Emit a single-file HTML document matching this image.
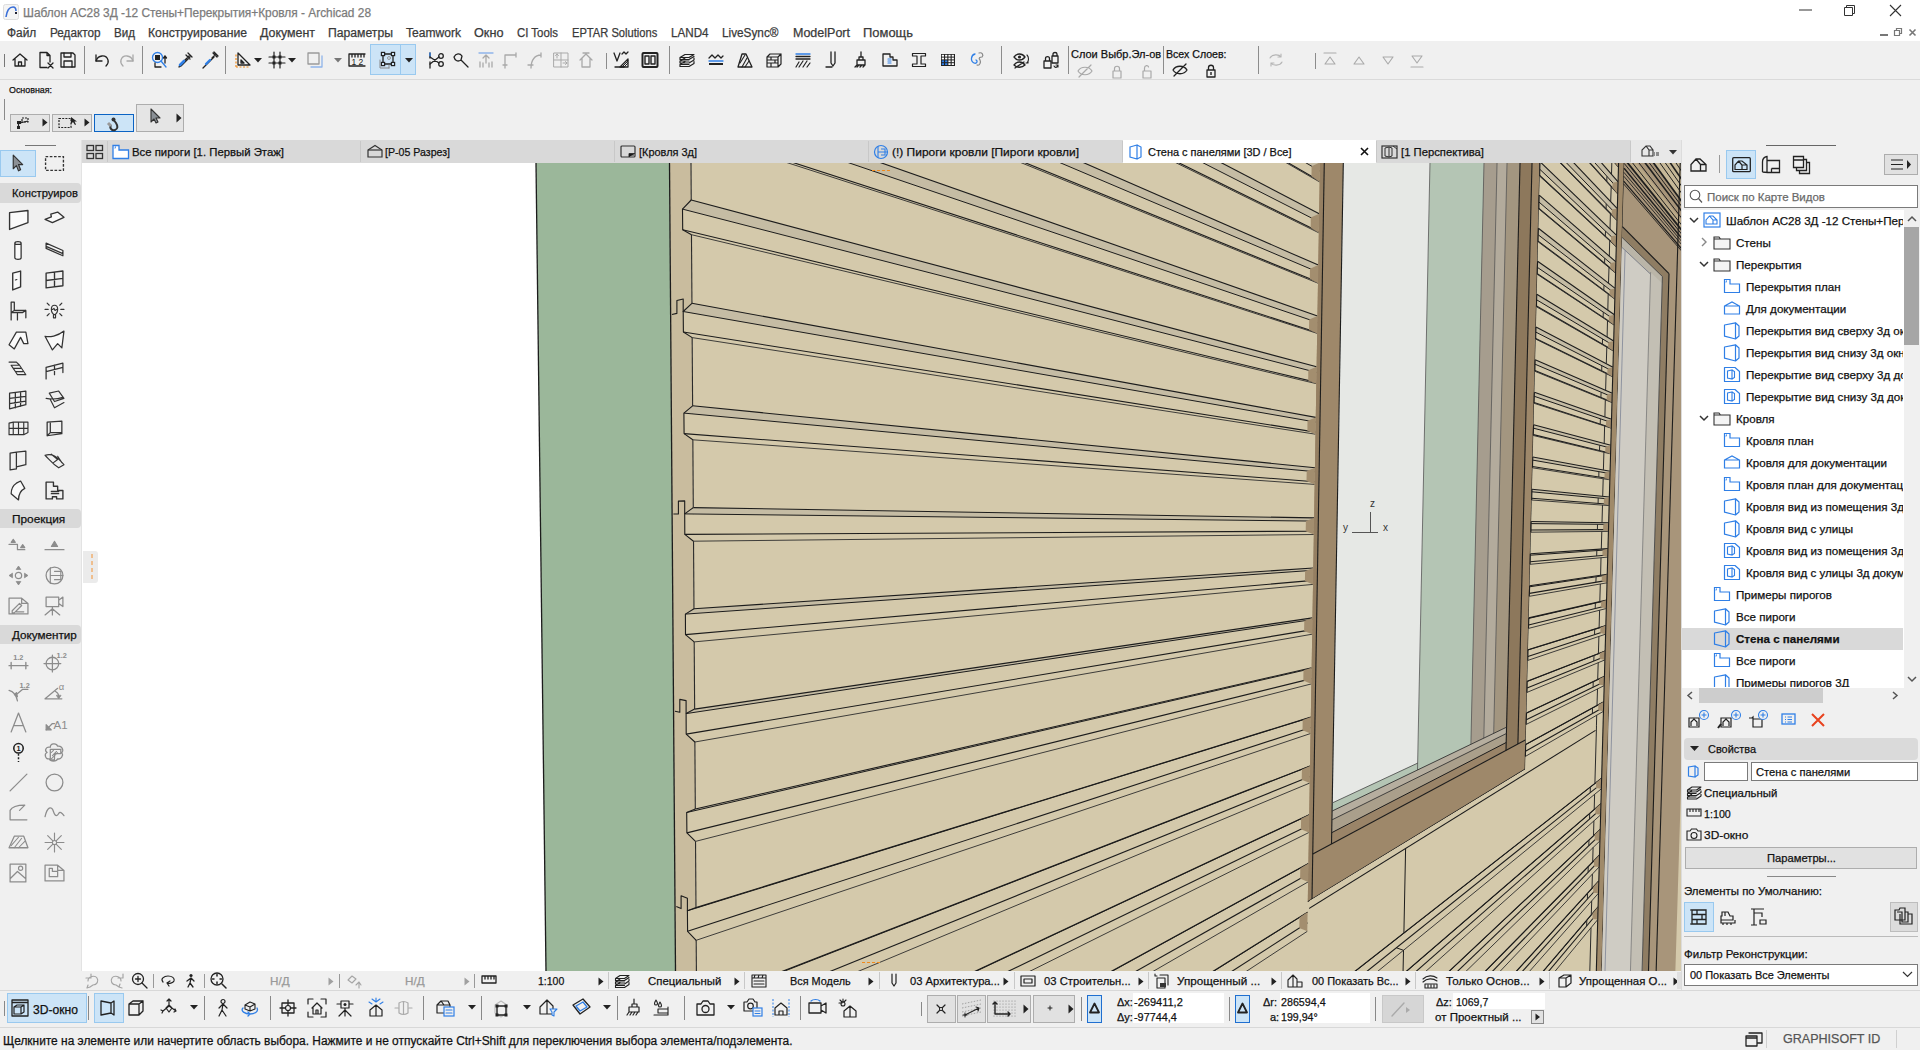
<!DOCTYPE html><html><head><meta charset='utf-8'><style>
*{box-sizing:border-box}
body{margin:0;width:1920px;height:1050px;overflow:hidden;position:relative;background:#f0f0f0;font-family:"Liberation Sans",sans-serif;color:#000}
.a{position:absolute}
.t{position:absolute;white-space:nowrap;line-height:1;-webkit-text-stroke:0.25px currentColor}
svg{position:absolute;overflow:visible}
</style></head><body><div class="a" style="left:0px;top:0px;width:1920px;height:41px;background:#fff;"></div><svg style="left:3px;top:4px" width="16" height="16" viewBox="0 0 16 16"><rect x="0.5" y="0.5" width="15" height="15" rx="2" fill="#f4f4f4" stroke="#ddd"/><path d="M3,13C4,6 7,3 10,3C12,3 13,5 13,7" fill="none" stroke="#3a6fd8" stroke-width="1.6"/><rect x="12" y="8" width="2" height="2" fill="#223"/></svg><div class="t" style="left:23px;top:7.00px;font-size:12px;color:#7b7b7b;transform:scaleX(0.9900);transform-origin:0 0;">Шаблон АС28 3Д -12 Стены+Перекрытия+Кровля - Archicad 28</div><svg style="left:1799px;top:9px" width="14" height="2" viewBox="0 0 14 2"><rect width="13" height="1" y="0.5" fill="#333"/></svg><svg style="left:1844px;top:5px" width="11" height="11" viewBox="0 0 11 11"><path d="M0.5,2.5H8.5V10.5H0.5Z M2.5,2.5V0.5H10.5V8.5H8.5" fill="none" stroke="#333" stroke-width="1"/></svg><svg style="left:1890px;top:5px" width="11" height="11" viewBox="0 0 11 11"><path d="M0,0L11,11M11,0L0,11" stroke="#333" stroke-width="1.1"/></svg><svg style="left:1880px;top:31px" width="9" height="5" viewBox="0 0 9 5"><rect y="3" width="8" height="2" fill="#777"/></svg><svg style="left:1894px;top:28px" width="8" height="8" viewBox="0 0 8 8"><path d="M0.5,2.5H5.5V7.5H0.5ZM2.5,2.5V0.5H7.5V5.5H5.5" fill="none" stroke="#777" stroke-width="1.2"/></svg><svg style="left:1909px;top:29px" width="7" height="7" viewBox="0 0 7 7"><path d="M0.5,0.5L6.5,6.5M6.5,0.5L0.5,6.5" stroke="#777" stroke-width="1.6"/></svg><div class="t" style="left:7.0px;top:27.00px;font-size:12px;color:#3a3a3a;transform:scaleX(0.9910);transform-origin:0 0;">Файл</div><div class="t" style="left:49.5px;top:27.00px;font-size:12px;color:#3a3a3a;transform:scaleX(0.9776);transform-origin:0 0;">Редактор</div><div class="t" style="left:113.5px;top:27.00px;font-size:12px;color:#3a3a3a;transform:scaleX(0.9669);transform-origin:0 0;">Вид</div><div class="t" style="left:147.5px;top:27.00px;font-size:12px;color:#3a3a3a;transform:scaleX(1.0175);transform-origin:0 0;">Конструирование</div><div class="t" style="left:259.5px;top:27.00px;font-size:12px;color:#3a3a3a;transform:scaleX(1.0332);transform-origin:0 0;">Документ</div><div class="t" style="left:327.5px;top:27.00px;font-size:12px;color:#3a3a3a;transform:scaleX(1.0161);transform-origin:0 0;">Параметры</div><div class="t" style="left:405.5px;top:27.00px;font-size:12px;color:#3a3a3a;transform:scaleX(1.0057);transform-origin:0 0;">Teamwork</div><div class="t" style="left:474.0px;top:27.00px;font-size:12px;color:#3a3a3a;transform:scaleX(1.0577);transform-origin:0 0;">Окно</div><div class="t" style="left:517.0px;top:27.00px;font-size:12px;color:#3a3a3a;transform:scaleX(0.9504);transform-origin:0 0;">CI Tools</div><div class="t" style="left:572.0px;top:27.00px;font-size:12px;color:#3a3a3a;transform:scaleX(0.9284);transform-origin:0 0;">EPTAR Solutions</div><div class="t" style="left:670.5px;top:27.00px;font-size:12px;color:#3a3a3a;transform:scaleX(0.9693);transform-origin:0 0;">LAND4</div><div class="t" style="left:721.5px;top:27.00px;font-size:12px;color:#3a3a3a;transform:scaleX(0.9818);transform-origin:0 0;">LiveSync®</div><div class="t" style="left:792.5px;top:27.00px;font-size:12px;color:#3a3a3a;transform:scaleX(1.0420);transform-origin:0 0;">ModelPort</div><div class="t" style="left:862.5px;top:27.00px;font-size:12px;color:#3a3a3a;transform:scaleX(1.0785);transform-origin:0 0;">Помощь</div><div class="a" style="left:0px;top:79px;width:1920px;height:1px;background:#dadada;"></div><div class="a" style="left:4px;top:54px;width:1px;height:13px;background:#777;"></div><div class="a" style="left:84px;top:46px;width:1px;height:28px;background:#8c8c8c;"></div><div class="a" style="left:142px;top:46px;width:1px;height:28px;background:#8c8c8c;"></div><div class="a" style="left:225px;top:46px;width:1px;height:28px;background:#8c8c8c;"></div><div class="a" style="left:669px;top:46px;width:1px;height:28px;background:#8c8c8c;"></div><div class="a" style="left:1001px;top:46px;width:1px;height:28px;background:#8c8c8c;"></div><div class="a" style="left:1068px;top:46px;width:1px;height:28px;background:#8c8c8c;"></div><div class="a" style="left:1163px;top:46px;width:1px;height:28px;background:#8c8c8c;"></div><div class="a" style="left:1258px;top:46px;width:1px;height:28px;background:#8c8c8c;"></div><div class="a" style="left:606px;top:53px;width:1px;height:16px;background:#8c8c8c;"></div><div class="a" style="left:1315px;top:53px;width:1px;height:16px;background:#8c8c8c;"></div><div class="a" style="left:370px;top:44px;width:46px;height:31px;background:#cce4f7;border:1px solid #99c9ef"></div><div class="a" style="left:400px;top:45px;width:1px;height:29px;background:#99c9ef;"></div><svg style="left:11px;top:51px" width="18" height="18" viewBox="0 0 18 18"><path d="M2,9L9,3L16,9M4,7.5V15H14V7.5M7.5,15V11H10.5V15" fill="none" stroke="#222" stroke-width="1.3" stroke-linejoin="round" stroke-linecap="round"/></svg><svg style="left:37px;top:51px" width="18" height="18" viewBox="0 0 18 18"><path d="M3,1.5H10L13,4.5V11M3,1.5V16.5H10M10,1.5V4.5H13" fill="none" stroke="#222" stroke-width="1.3" stroke-linejoin="round" stroke-linecap="round"/><path d="M11,12L16,17M16,12L11,17" fill="none" stroke="#222" stroke-width="1.3" stroke-linejoin="round" stroke-linecap="round"/></svg><svg style="left:59px;top:51px" width="18" height="18" viewBox="0 0 18 18"><path d="M2,2H14L16,4V16H2Z" fill="none" stroke="#222" stroke-width="1.3" stroke-linejoin="round" stroke-linecap="round"/><path d="M5,2V6H12V2M5,16V10H13V16" fill="none" stroke="#222" stroke-width="1.3" stroke-linejoin="round" stroke-linecap="round"/></svg><svg style="left:93px;top:51px" width="18" height="18" viewBox="0 0 18 18"><path d="M3,4V10H9" fill="none" stroke="#222" stroke-width="1.3" stroke-linejoin="round" stroke-linecap="round"/><path d="M3,10C5,4 13,3 15,9C16,12 14,14 13,15" fill="none" stroke="#222" stroke-width="1.3" stroke-linejoin="round" stroke-linecap="round"/></svg><svg style="left:118px;top:51px" width="18" height="18" viewBox="0 0 18 18"><path d="M15,4V10H9" fill="none" stroke="#a9a9a9" stroke-width="1.3" stroke-linejoin="round" stroke-linecap="round"/><path d="M15,10C13,4 5,3 3,9C2,12 4,14 5,15" fill="none" stroke="#a9a9a9" stroke-width="1.3" stroke-linejoin="round" stroke-linecap="round"/></svg><svg style="left:151px;top:51px" width="18" height="18" viewBox="0 0 18 18"><circle cx="6.5" cy="6.5" r="5" fill="none" stroke="#2f7fe6" stroke-width="1.3" stroke-linejoin="round" stroke-linecap="round"/><rect x="4" y="4" width="5" height="5" fill="#222"/><path d="M10,10L15,16" fill="none" stroke="#2f7fe6" stroke-width="1.3" stroke-linejoin="round" stroke-linecap="round"/><path d="M4,12V16H10M14,5V12M12.5,7L14,5L15.5,7" fill="none" stroke="#222" stroke-width="1.3" stroke-linejoin="round" stroke-linecap="round"/></svg><svg style="left:176px;top:51px" width="18" height="18" viewBox="0 0 18 18"><path d="M12,2L16,6M10,4L14,8M13,5L4,14L3,16L5,15L14,6" fill="none" stroke="#222" stroke-width="1.3" stroke-linejoin="round" stroke-linecap="round"/><path d="M4,14L8,10" fill="none" stroke="#2f7fe6" stroke-width="2.6" stroke-linejoin="round" stroke-linecap="round"/></svg><svg style="left:201px;top:51px" width="18" height="18" viewBox="0 0 18 18"><path d="M13,1L17,5M15,3L11,7M12,2L16,6M13,6L4,15L2,17M8,11L4,15" fill="none" stroke="#222" stroke-width="1.3" stroke-linejoin="round" stroke-linecap="round"/><path d="M5,13L9,9" fill="none" stroke="#2f7fe6" stroke-width="2.4" stroke-linejoin="round" stroke-linecap="round"/></svg><svg style="left:234px;top:51px" width="18" height="18" viewBox="0 0 18 18"><path d="M2,16V2" fill="none" stroke="#f08a1c" stroke-width="1.2" stroke-linejoin="round" stroke-dasharray="2,1.5"/><path d="M2,16H16" fill="none" stroke="#f08a1c" stroke-width="1.2" stroke-linejoin="round" stroke-dasharray="2,1.5"/><path d="M4,2L16,14H4Z" fill="none" stroke="#222" stroke-width="1.3" stroke-linejoin="round" stroke-linecap="round"/><path d="M7,9L10,12H7Z" fill="none" stroke="#222" stroke-width="1.3" stroke-linejoin="round" stroke-linecap="round"/></svg><svg style="left:268px;top:51px" width="18" height="18" viewBox="0 0 18 18"><path d="M6,1V17M12,1V17M1,6H17M1,12H17" fill="none" stroke="#222" stroke-width="1.2" stroke-linejoin="round" stroke-linecap="round"/><rect x="4.5" y="4.5" width="3" height="3" fill="#222"/><rect x="4.5" y="10.5" width="3" height="3" fill="#222"/><rect x="10.5" y="4.5" width="3" height="3" fill="#222"/><rect x="10.5" y="10.5" width="3" height="3" fill="#222"/></svg><svg style="left:306px;top:51px" width="18" height="18" viewBox="0 0 18 18"><path d="M2,2H13V13H2Z" fill="none" stroke="#9a9a9a" stroke-width="1.3" stroke-linejoin="round" stroke-linecap="round"/><path d="M5,16H16V5" fill="none" stroke="#8fb4ea" stroke-width="1.3" stroke-linejoin="round" stroke-linecap="round"/></svg><svg style="left:348px;top:51px" width="18" height="18" viewBox="0 0 18 18"><path d="M1,3H17M1,3V15H17M4,3V6M7,3V6M10,3V6M13,3V6M16,3V6" fill="none" stroke="#222" stroke-width="1.3" stroke-linejoin="round" stroke-linecap="round"/><text x="3.5" y="14" font-size="8.5" font-family="Liberation Sans" fill="#222">1 2</text></svg><svg style="left:378px;top:51px" width="18" height="18" viewBox="0 0 18 18"><path d="M5,3H15V13H5Z" fill="none" stroke="#222" stroke-width="1.3" stroke-linejoin="round" stroke-linecap="round"/><rect x="3.4" y="1.4" width="3.2" height="3.2" fill="#cce4f7" stroke="#222" stroke-width="1.2"/><rect x="13.4" y="1.4" width="3.2" height="3.2" fill="#cce4f7" stroke="#222" stroke-width="1.2"/><rect x="3.4" y="11.4" width="3.2" height="3.2" fill="#cce4f7" stroke="#222" stroke-width="1.2"/><rect x="13.4" y="11.4" width="3.2" height="3.2" fill="#cce4f7" stroke="#222" stroke-width="1.2"/><path d="M2,9V17H11M11,14V17" fill="none" stroke="#888" stroke-width="1" stroke-linejoin="round" stroke-linecap="round"/><circle cx="11" cy="7" r="1.5" fill="none" stroke="#999" stroke-width="1" stroke-linejoin="round" stroke-linecap="round"/></svg><svg style="left:427px;top:51px" width="18" height="18" viewBox="0 0 18 18"><path d="M3,2V7M3,11V17" fill="none" stroke="#222" stroke-width="1.3" stroke-linejoin="round" stroke-linecap="round"/><path d="M3,2V5" fill="none" stroke="#2f7fe6" stroke-width="1.3" stroke-linejoin="round" stroke-linecap="round"/><circle cx="14" cy="5" r="2.3" fill="none" stroke="#222" stroke-width="1.3" stroke-linejoin="round" stroke-linecap="round"/><circle cx="14" cy="13" r="2.3" fill="none" stroke="#222" stroke-width="1.3" stroke-linejoin="round" stroke-linecap="round"/><path d="M3,13L12,6M3,6L12,12" fill="none" stroke="#222" stroke-width="1.3" stroke-linejoin="round" stroke-linecap="round"/></svg><svg style="left:452px;top:51px" width="18" height="18" viewBox="0 0 18 18"><path d="M2,6C4,2 8,2 10,5L9,9C6,11 3,10 2,6ZM9,9L16,16" fill="none" stroke="#222" stroke-width="1.3" stroke-linejoin="round" stroke-linecap="round"/></svg><svg style="left:477px;top:51px" width="18" height="18" viewBox="0 0 18 18"><path d="M2,2H16" fill="none" stroke="#8fb4ea" stroke-width="1.3" stroke-linejoin="round" stroke-linecap="round"/><path d="M9,4V12M6,7L9,4L12,7M3,11V16M6,12V16M12,12V16M15,11V16" fill="none" stroke="#a9a9a9" stroke-width="1.3" stroke-linejoin="round" stroke-linecap="round"/></svg><svg style="left:502px;top:51px" width="18" height="18" viewBox="0 0 18 18"><path d="M3,17V4H14M14,2V6M1,14H5" fill="none" stroke="#a9a9a9" stroke-width="1.3" stroke-linejoin="round" stroke-linecap="round"/></svg><svg style="left:527px;top:51px" width="18" height="18" viewBox="0 0 18 18"><path d="M4,17C4,9 8,4 14,4M14,2V6M1,14H6" fill="none" stroke="#a9a9a9" stroke-width="1.3" stroke-linejoin="round" stroke-linecap="round"/></svg><svg style="left:552px;top:51px" width="18" height="18" viewBox="0 0 18 18"><path d="M2,2H16V16H2ZM9,2V16M2,9H16M5,7V3M3.5,4.5L5,3L6.5,4.5M11,12H15M13.5,10.5L15,12L13.5,13.5" fill="none" stroke="#a9a9a9" stroke-width="1" stroke-linejoin="round" stroke-linecap="round"/></svg><svg style="left:577px;top:51px" width="18" height="18" viewBox="0 0 18 18"><path d="M3,9L9,3L15,9M5,7.5V16H13V7.5M6,2H12" fill="none" stroke="#a9a9a9" stroke-width="1.3" stroke-linejoin="round" stroke-linecap="round"/></svg><svg style="left:612px;top:51px" width="18" height="18" viewBox="0 0 18 18"><path d="M2,2L5,10L8,2M3,16H12M10,3L12,1L14,3L16,1" fill="none" stroke="#222" stroke-width="1.3" stroke-linejoin="round" stroke-linecap="round"/><path d="M8,16L16,8V16Z" fill="none" stroke="#222" stroke-width="1.3" stroke-linejoin="round" stroke-linecap="round"/><path d="M10,16L16,10M12,16L16,12" fill="none" stroke="#222" stroke-width="1" stroke-linejoin="round" stroke-linecap="round"/></svg><svg style="left:641px;top:51px" width="18" height="18" viewBox="0 0 18 18"><rect x="1.5" y="2" width="15" height="14" rx="1" fill="none" stroke="#222" stroke-width="2"/><path d="M4,5H8V13H4ZM10,5H14V13H10Z" fill="none" stroke="#222" stroke-width="1.4" stroke-linejoin="round" stroke-linecap="round"/></svg><svg style="left:678px;top:51px" width="18" height="18" viewBox="0 0 18 18"><path d="M2,6.5L7,3.5H16L11,6.5ZM2,6.5V8.5L11,8.5L16,5.5M2,10L7,7M11,10H2V12H11L16,9V7M2,13.5L7,10.5M11,13.5H2V15.5H11L16,12.5V10.5" fill="none" stroke="#222" stroke-width="1.2" stroke-linejoin="round" stroke-linecap="round"/></svg><svg style="left:707px;top:51px" width="18" height="18" viewBox="0 0 18 18"><path d="M2,7L5,4L8,7L11,4L14,7L16,5" fill="none" stroke="#222" stroke-width="1.3" stroke-linejoin="round" stroke-linecap="round"/><path d="M2,10H16" fill="none" stroke="#2f7fe6" stroke-width="1.3" stroke-linejoin="round" stroke-linecap="round"/><rect x="2" y="12" width="14" height="2" fill="#222"/></svg><svg style="left:736px;top:51px" width="18" height="18" viewBox="0 0 18 18"><path d="M2,16L6,3H10L16,16Z" fill="none" stroke="#222" stroke-width="1.3" stroke-linejoin="round" stroke-linecap="round"/><path d="M4,12L9,4M6,16L11,7M9,16L13,10" fill="none" stroke="#222" stroke-width="1.1" stroke-linejoin="round" stroke-linecap="round"/></svg><svg style="left:765px;top:51px" width="18" height="18" viewBox="0 0 18 18"><path d="M2,6L5,3H16V13L13,16H2ZM2,6H13V16M13,6L16,3M2,9H13M2,12H13M6,6V9M10,9V12M6,12V16" fill="none" stroke="#222" stroke-width="1.2" stroke-linejoin="round" stroke-linecap="round"/></svg><svg style="left:794px;top:51px" width="18" height="18" viewBox="0 0 18 18"><path d="M2,3H16" fill="none" stroke="#2f7fe6" stroke-width="1.3" stroke-linejoin="round" stroke-linecap="round"/><path d="M2,5.5H16M2,8H16" fill="none" stroke="#222" stroke-width="1.3" stroke-linejoin="round" stroke-linecap="round"/><path d="M2,16L5,11M5,16L9,10M9,16L13,10M13,16L16,12" fill="none" stroke="#222" stroke-width="1.2" stroke-linejoin="round" stroke-linecap="round"/></svg><svg style="left:823px;top:51px" width="18" height="18" viewBox="0 0 18 18"><path d="M8,1V12L10,15L12,12V1M3,16H9" fill="none" stroke="#222" stroke-width="1.3" stroke-linejoin="round" stroke-linecap="round"/></svg><svg style="left:852px;top:51px" width="18" height="18" viewBox="0 0 18 18"><path d="M9,1V6M7,6H11V9H7ZM5,9H13V14H5ZM3,16L5,14M5,16L7,14M8,16L10,14M11,16L13,14" fill="none" stroke="#222" stroke-width="1.3" stroke-linejoin="round" stroke-linecap="round"/></svg><svg style="left:881px;top:51px" width="18" height="18" viewBox="0 0 18 18"><path d="M2,3H9V6H12V9H16V15H2Z" fill="none" stroke="#222" stroke-width="1.3" stroke-linejoin="round" stroke-linecap="round"/><path d="M7,8H10M7,10H10M7,12H10" fill="none" stroke="#2f7fe6" stroke-width="1.2" stroke-linejoin="round" stroke-linecap="round"/></svg><svg style="left:910px;top:51px" width="18" height="18" viewBox="0 0 18 18"><path d="M2.5,2.5H15.5V5H11V13H15.5V15.5H2.5V13H7V5H2.5Z" fill="none" stroke="#222" stroke-width="1.2" stroke-linejoin="round" stroke-linecap="round"/></svg><svg style="left:939px;top:51px" width="18" height="18" viewBox="0 0 18 18"><rect x="2" y="3" width="14" height="12" fill="#222"/><rect x="2.8" y="3.8" width="2.2" height="1.8" fill="#fff"/><rect x="2.8" y="6.6" width="2.2" height="1.8" fill="#fff"/><rect x="2.8" y="9.399999999999999" width="2.2" height="1.8" fill="#2f7fe6"/><rect x="2.8" y="12.2" width="2.2" height="1.8" fill="#2f7fe6"/><rect x="6.1" y="3.8" width="2.2" height="1.8" fill="#fff"/><rect x="6.1" y="6.6" width="2.2" height="1.8" fill="#fff"/><rect x="6.1" y="9.399999999999999" width="2.2" height="1.8" fill="#2f7fe6"/><rect x="6.1" y="12.2" width="2.2" height="1.8" fill="#2f7fe6"/><rect x="9.399999999999999" y="3.8" width="2.2" height="1.8" fill="#fff"/><rect x="9.399999999999999" y="6.6" width="2.2" height="1.8" fill="#fff"/><rect x="9.399999999999999" y="9.399999999999999" width="2.2" height="1.8" fill="#fff"/><rect x="9.399999999999999" y="12.2" width="2.2" height="1.8" fill="#fff"/><rect x="12.7" y="3.8" width="2.2" height="1.8" fill="#fff"/><rect x="12.7" y="6.6" width="2.2" height="1.8" fill="#fff"/><rect x="12.7" y="9.399999999999999" width="2.2" height="1.8" fill="#fff"/><rect x="12.7" y="12.2" width="2.2" height="1.8" fill="#fff"/></svg><svg style="left:968px;top:51px" width="18" height="18" viewBox="0 0 18 18"><path d="M7,3C3,4 2,10 6,12C9,13 10,10 8,9" fill="none" stroke="#2f7fe6" stroke-width="1.3" stroke-linejoin="round" stroke-linecap="round"/><path d="M11,2C14,1 16,4 14,6C12,6 10,7 12,9C13,11 12,15 9,14" fill="none" stroke="#888" stroke-width="1.2" stroke-linejoin="round" stroke-linecap="round"/></svg><svg style="left:1012px;top:51px" width="18" height="18" viewBox="0 0 18 18"><path d="M2,6C5,2 10,2 13,6C10,10 5,10 2,6Z" fill="none" stroke="#222" stroke-width="1.3" stroke-linejoin="round" stroke-linecap="round"/><circle cx="7.5" cy="6" r="1.6" fill="#222"/><path d="M2,14C5,10 10,10 13,14C10,17 5,17 2,14ZM3,17L12,11" fill="none" stroke="#222" stroke-width="1.3" stroke-linejoin="round" stroke-linecap="round"/><path d="M15,4C17,6 17,10 15,12M14,12H16V10" fill="none" stroke="#222" stroke-width="1.1" stroke-linejoin="round" stroke-linecap="round"/></svg><svg style="left:1042px;top:51px" width="18" height="18" viewBox="0 0 18 18"><path d="M2,10H9V17H2ZM3.5,10V7.5C3.5,5 7.5,5 7.5,7.5V10" fill="none" stroke="#222" stroke-width="1.3" stroke-linejoin="round" stroke-linecap="round"/><path d="M10,5H16V12H10ZM11,5V3C11,1 15,1 15,3V5" fill="none" stroke="#222" stroke-width="1.3" stroke-linejoin="round" stroke-linecap="round"/><path d="M12,15C13,17 15,17 16,14M14,14H16V16" fill="none" stroke="#222" stroke-width="1.1" stroke-linejoin="round" stroke-linecap="round"/></svg><svg style="left:254px;top:58px" width="8" height="5" viewBox="0 0 8 5"><path d="M0,0H8L4,4.5Z" fill="#222"/></svg><svg style="left:288px;top:58px" width="8" height="5" viewBox="0 0 8 5"><path d="M0,0H8L4,4.5Z" fill="#222"/></svg><svg style="left:334px;top:58px" width="8" height="5" viewBox="0 0 8 5"><path d="M0,0H8L4,4.5Z" fill="#777"/></svg><svg style="left:405px;top:58px" width="8" height="5" viewBox="0 0 8 5"><path d="M0,0H8L4,4.5Z" fill="#222"/></svg><div class="t" style="left:1071px;top:49px;font-size:11px;color:#111;">Слои Выбр.Эл-ов</div><div class="t" style="left:1166px;top:49px;font-size:10.6px;color:#111;">Всех Слоев:</div><svg style="left:1076px;top:62px" width="18" height="18" viewBox="0 0 18 18"><path d="M2,9C5,4 13,4 16,9C13,14 5,14 2,9ZM3,15L15,3" fill="none" stroke="#a9a9a9" stroke-width="1.2" stroke-linejoin="round" stroke-linecap="round"/></svg><svg style="left:1108px;top:62px" width="18" height="18" viewBox="0 0 18 18"><path d="M5,9H13V16H5ZM6.5,9V6.5C6.5,3.5 11.5,3.5 11.5,6.5V9" fill="none" stroke="#a9a9a9" stroke-width="1.2" stroke-linejoin="round" stroke-linecap="round"/></svg><svg style="left:1137px;top:62px" width="18" height="18" viewBox="0 0 18 18"><path d="M6,9H14V16H6ZM7.5,9V6C7.5,3 11.5,3 11.5,5" fill="none" stroke="#a9a9a9" stroke-width="1.2" stroke-linejoin="round" stroke-linecap="round"/></svg><svg style="left:1171px;top:61px" width="18" height="18" viewBox="0 0 18 18"><path d="M2,9C5,4 13,4 16,9C13,14 5,14 2,9ZM3,15L15,3" fill="none" stroke="#222" stroke-width="1.3" stroke-linejoin="round" stroke-linecap="round"/></svg><svg style="left:1202px;top:61px" width="18" height="18" viewBox="0 0 18 18"><path d="M5,9H13V16H5ZM6.5,9V6.5C6.5,3.5 11.5,3.5 11.5,6.5V9" fill="none" stroke="#222" stroke-width="1.3" stroke-linejoin="round" stroke-linecap="round"/><rect x="8.3" y="11" width="1.4" height="3" fill="#222"/></svg><svg style="left:1267px;top:51px" width="18" height="18" viewBox="0 0 18 18"><path d="M3,7C5,3 12,3 14,6M14,3V6H11M15,11C13,15 6,15 4,12M4,15V12H7" fill="none" stroke="#b5b5b5" stroke-width="1.1" stroke-linejoin="round" stroke-linecap="round"/></svg><svg style="left:1321px;top:51px" width="18" height="18" viewBox="0 0 18 18"><path d="M3,2H15M4,13L9,6L14,13Z" fill="none" stroke="#a9a9a9" stroke-width="1.1" stroke-linejoin="round" stroke-linecap="round"/></svg><svg style="left:1350px;top:51px" width="18" height="18" viewBox="0 0 18 18"><path d="M4,13L9,6L14,13Z" fill="none" stroke="#a9a9a9" stroke-width="1.1" stroke-linejoin="round" stroke-linecap="round"/></svg><svg style="left:1379px;top:51px" width="18" height="18" viewBox="0 0 18 18"><path d="M4,6L9,13L14,6Z" fill="none" stroke="#a9a9a9" stroke-width="1.1" stroke-linejoin="round" stroke-linecap="round"/></svg><svg style="left:1408px;top:51px" width="18" height="18" viewBox="0 0 18 18"><path d="M3,16H15M4,5L9,12L14,5Z" fill="none" stroke="#a9a9a9" stroke-width="1.1" stroke-linejoin="round" stroke-linecap="round"/></svg><div class="t" style="left:9px;top:85.39px;font-size:9.8px;color:#111;transform:scaleX(0.9054);transform-origin:0 0;">Основная:</div><div class="a" style="left:4px;top:99px;width:1px;height:21px;background:#8a8a8a;"></div><div class="a" style="left:10px;top:114px;width:40px;height:18px;background:#e5e5e5;border:1px solid #adadad"></div><div class="a" style="left:52px;top:114px;width:40px;height:18px;background:#e5e5e5;border:1px solid #adadad"></div><div class="a" style="left:94px;top:114px;width:40px;height:18px;background:#cce4f7;border:1px solid #0b63c4"></div><div class="a" style="left:136px;top:104px;width:48px;height:28px;background:#e5e5e5;border:1px solid #adadad"></div><svg style="left:42px;top:118px" width="6" height="9" viewBox="0 0 6 9"><path d="M0.5,0.5L5.5,4.5L0.5,8.5Z" fill="#222"/></svg><svg style="left:84px;top:118px" width="6" height="9" viewBox="0 0 6 9"><path d="M0.5,0.5L5.5,4.5L0.5,8.5Z" fill="#222"/></svg><svg style="left:176px;top:113px" width="6" height="10" viewBox="0 0 6 10"><path d="M0.5,0.5L5.5,5.0L0.5,9.5Z" fill="#222"/></svg><svg style="left:16px;top:116px" width="18" height="14" viewBox="0 0 18 14"><path d="M2,6H12V2H6V6" fill="none" stroke="#222" stroke-width="1.2" stroke-dasharray="2,1"/><rect x="1" y="5" width="4" height="3" fill="#222"/><rect x="1" y="10" width="3" height="3" fill="#222"/><path d="M2.5,12V7M4,7L12,5" stroke="#222" stroke-width="1.2"/></svg><svg style="left:58px;top:116px" width="24" height="14" viewBox="0 0 24 14"><rect x="1" y="2.5" width="12" height="9" fill="none" stroke="#222" stroke-width="1.2" stroke-dasharray="2,1.2"/><path d="M13,1V8L15,6L17,9L18,8.5L16.5,5.5H19Z" fill="#222"/></svg><svg style="left:105px;top:115px" width="18" height="16" viewBox="0 0 18 16"><path d="M6,10C4,13 7,16 10,15C13,14 13,11 11,8L8,4" fill="none" stroke="#333" stroke-width="2"/><path d="M3,8L6,11" stroke="#999" stroke-width="3"/><circle cx="8.5" cy="4.5" r="2" fill="#333"/></svg><svg style="left:150px;top:108px" width="14" height="16" viewBox="0 0 14 16"><path d="M1,1V14L4,11L6,15L8,14L6,10H10Z" fill="#8a9096" stroke="#333" stroke-width="1.1" stroke-linejoin="round"/></svg><div class="a" style="left:82px;top:140px;width:1599px;height:23px;background:#d9d9d9;"></div><div class="a" style="left:1123px;top:140px;width:253px;height:23px;background:#fff;"></div><div class="a" style="left:1631px;top:140px;width:50px;height:23px;background:#e8e8e8;"></div><div class="a" style="left:107px;top:141px;width:1px;height:21px;background:#c8c8c8;"></div><div class="a" style="left:360px;top:141px;width:1px;height:21px;background:#c8c8c8;"></div><div class="a" style="left:614px;top:141px;width:1px;height:21px;background:#c8c8c8;"></div><div class="a" style="left:868px;top:141px;width:1px;height:21px;background:#c8c8c8;"></div><div class="a" style="left:1122px;top:141px;width:1px;height:21px;background:#c8c8c8;"></div><div class="a" style="left:1376px;top:141px;width:1px;height:21px;background:#c8c8c8;"></div><div class="a" style="left:1630px;top:141px;width:1px;height:21px;background:#c8c8c8;"></div><svg style="left:86px;top:144px" width="18" height="16" viewBox="0 0 18 16"><rect x="1" y="1.5" width="6.5" height="5" fill="none" stroke="#333" stroke-width="1.3"/><rect x="10" y="1.5" width="6.5" height="5" fill="none" stroke="#333" stroke-width="1.3"/><rect x="1" y="9.5" width="6.5" height="5" fill="none" stroke="#333" stroke-width="1.3"/><rect x="10" y="9.5" width="6.5" height="5" fill="none" stroke="#333" stroke-width="1.3"/></svg><svg style="left:112px;top:144px" width="17" height="16" viewBox="0 0 17 16"><path d="M1,1.5H7V6H16.5V14.5H1Z" fill="#fff" stroke="#2f7fe6" stroke-width="1.3"/><path d="M3.5,2.5L3,4.5" stroke="#2f7fe6" stroke-width="1"/></svg><svg style="left:367px;top:144px" width="17" height="16" viewBox="0 0 17 16"><path d="M1,6L8,1.5L15,6V13H1Z" fill="none" stroke="#333" stroke-width="1.2"/><path d="M1,6H15" stroke="#333" stroke-width="1.2"/></svg><svg style="left:620px;top:144px" width="17" height="16" viewBox="0 0 17 16"><rect x="1" y="2" width="14" height="11" rx="1" fill="none" stroke="#333" stroke-width="1.2"/><path d="M9,13V9.5H15M10,11H14" stroke="#333" stroke-width="1"/></svg><svg style="left:873px;top:144px" width="17" height="16" viewBox="0 0 17 16"><circle cx="8" cy="8" r="6.5" fill="none" stroke="#2f7fe6" stroke-width="1.2"/><path d="M5,2V14M5,8H14M8,5H12V11H8" fill="none" stroke="#2f7fe6" stroke-width="1.1"/></svg><svg style="left:1128px;top:144px" width="17" height="16" viewBox="0 0 17 16"><path d="M2,3L9,1V15L2,13Z M9,1L13,3V13L9,15" fill="none" stroke="#2f7fe6" stroke-width="1.2"/></svg><svg style="left:1381px;top:144px" width="17" height="16" viewBox="0 0 17 16"><rect x="1" y="2" width="15" height="12" fill="none" stroke="#333" stroke-width="1.2"/><path d="M4,4L8,3V13L4,12ZM8,3L11,4V12L8,13" fill="none" stroke="#333" stroke-width="1"/><path d="M12,2L16,5" stroke="#333" stroke-width="1"/></svg><div class="t" style="left:132px;top:147.43px;font-size:11.5px;color:#111;transform:scaleX(0.9871);transform-origin:0 0;">Все пироги [1. Первый Этаж]</div><div class="t" style="left:385px;top:147.43px;font-size:11.5px;color:#111;transform:scaleX(0.9216);transform-origin:0 0;">[P-05 Разрез]</div><div class="t" style="left:639px;top:147.43px;font-size:11.5px;color:#111;transform:scaleX(0.9512);transform-origin:0 0;">[Кровля 3д]</div><div class="t" style="left:892px;top:147.43px;font-size:11.5px;color:#111;transform:scaleX(1.0398);transform-origin:0 0;">(!) Пироги кровли [Пироги кровли]</div><div class="t" style="left:1147.5px;top:147.43px;font-size:11.5px;color:#111;transform:scaleX(0.9524);transform-origin:0 0;">Стена с панелями [3D / Все]</div><div class="t" style="left:1401px;top:147.43px;font-size:11.5px;color:#111;transform:scaleX(0.9805);transform-origin:0 0;">[1 Перспектива]</div><svg style="left:1360px;top:147px" width="9" height="9" viewBox="0 0 9 9"><path d="M1,1L8,8M8,1L1,8" stroke="#111" stroke-width="1.6"/></svg><svg style="left:1641px;top:144px" width="20" height="16" viewBox="0 0 20 16"><path d="M1,12V6L5,2H9L12,6V12ZM5,2L8,6V12M8,6H12" fill="none" stroke="#333" stroke-width="1.1"/><path d="M13,9H14M13,11H14M15,9H18M15,11H18" stroke="#333" stroke-width="1.2"/></svg><svg style="left:1669px;top:150px" width="8" height="5" viewBox="0 0 8 5"><path d="M0,0H8L4,4.5Z" fill="#333"/></svg><svg style="left:0;top:0" width="1920" height="1050" viewBox="0 0 1920 1050"><defs><clipPath id="cmain"><rect x="82" y="163" width="1599" height="808"/></clipPath></defs><rect x="82" y="163" width="1599" height="808" fill="#ffffff"/>
<g clip-path="url(#cmain)">
<polygon points="536.0,158.0 669.5,158.0 675.6,976.0 546.0,976.0" fill="#9bb79a"/>
<line x1="536.0" y1="163.0" x2="546.0" y2="971.0" stroke="#1c1c1c" stroke-width="1.3"/>
<polygon points="669.5,158.0 691.0,158.0 696.4,976.0 675.6,976.0" fill="#c9bc9e"/>
<polygon points="691.0,158.0 1686.0,158.0 1686.0,976.0 696.4,976.0" fill="#d4c9ab"/>
<line x1="669.5" y1="163.0" x2="675.5" y2="971.0" stroke="#1c1c1c" stroke-width="1.3"/>
<line x1="691.0" y1="163.0" x2="696.4" y2="971.0" stroke="#2a2a2a" stroke-width="1.1"/>
<polygon points="687.0,-438.7 1321.7,58.5 1321.6,68.9 678.1,-423.9" fill="#c5bca4"/>
<polygon points="678.1,-423.9 1321.6,68.9 1321.4,79.8 687.3,-394.2 678.2,-403.2" fill="#d4c9ab"/>
<line x1="687.0" y1="-438.7" x2="1321.7" y2="58.5" stroke="#1c1c1c" stroke-width="1.1"/>
<line x1="678.1" y1="-423.9" x2="1321.6" y2="68.9" stroke="#1c1c1c" stroke-width="1.0"/>
<line x1="678.2" y1="-403.2" x2="1321.4" y2="78.7" stroke="#1c1c1c" stroke-width="1.1"/>
<line x1="687.3" y1="-394.2" x2="1321.4" y2="79.8" stroke="#2c2c2c" stroke-width="0.9"/>
<polyline points="687.0,-438.7 678.1,-423.9 678.2,-403.2 687.3,-394.2" fill="none" stroke="#1c1c1c" stroke-width="1.1" stroke-linejoin="round"/>
<polygon points="1313.3,62.6 1321.7,58.5 1321.4,79.8 1313.2,72.6" fill="#a38e6f"/>
<polygon points="687.7,-329.8 1320.9,110.6 1320.7,120.1 678.9,-316.0" fill="#c5bca4"/>
<polygon points="678.9,-316.0 1320.7,120.1 1320.5,131.1 688.0,-287.1 679.0,-295.2" fill="#d4c9ab"/>
<line x1="687.7" y1="-329.8" x2="1320.9" y2="110.6" stroke="#1c1c1c" stroke-width="1.1"/>
<line x1="678.9" y1="-316.0" x2="1320.7" y2="120.1" stroke="#1c1c1c" stroke-width="1.0"/>
<line x1="679.0" y1="-295.2" x2="1320.5" y2="130.0" stroke="#1c1c1c" stroke-width="1.1"/>
<line x1="688.0" y1="-287.1" x2="1320.5" y2="131.1" stroke="#2c2c2c" stroke-width="0.9"/>
<polyline points="687.7,-329.8 678.9,-316.0 679.0,-295.2 688.0,-287.1" fill="none" stroke="#1c1c1c" stroke-width="1.1" stroke-linejoin="round"/>
<polygon points="1312.5,114.6 1320.9,110.6 1320.5,131.1 1312.3,124.5" fill="#a38e6f"/>
<polyline points="667.3,-300.7 672.6,-305.4 672.6,-318.3 678.9,-324.1 678.9,-311.1" fill="none" stroke="#1c1c1c" stroke-width="1.1" stroke-linejoin="round"/>
<polygon points="688.4,-221.9 1320.0,162.4 1319.9,171.1 679.6,-209.0" fill="#c5bca4"/>
<polygon points="679.6,-209.0 1319.9,171.1 1319.7,182.0 688.7,-181.0 679.7,-188.3" fill="#d4c9ab"/>
<line x1="688.4" y1="-221.9" x2="1320.0" y2="162.4" stroke="#1c1c1c" stroke-width="1.1"/>
<line x1="679.6" y1="-209.0" x2="1319.9" y2="171.1" stroke="#1c1c1c" stroke-width="1.0"/>
<line x1="679.7" y1="-188.3" x2="1319.7" y2="181.0" stroke="#1c1c1c" stroke-width="1.1"/>
<line x1="688.7" y1="-181.0" x2="1319.7" y2="182.0" stroke="#2c2c2c" stroke-width="0.9"/>
<polyline points="688.4,-221.9 679.6,-209.0 679.7,-188.3 688.7,-181.0" fill="none" stroke="#1c1c1c" stroke-width="1.1" stroke-linejoin="round"/>
<polygon points="1311.6,166.2 1320.0,162.4 1319.7,182.0 1311.5,176.2" fill="#a38e6f"/>
<polygon points="689.1,-115.0 1319.2,213.8 1319.0,221.8 680.3,-103.1" fill="#c5bca4"/>
<polygon points="680.3,-103.1 1319.0,221.8 1318.8,232.8 689.4,-75.9 680.5,-82.4" fill="#d4c9ab"/>
<line x1="689.1" y1="-115.0" x2="1319.2" y2="213.8" stroke="#1c1c1c" stroke-width="1.1"/>
<line x1="680.3" y1="-103.1" x2="1319.0" y2="221.8" stroke="#1c1c1c" stroke-width="1.0"/>
<line x1="680.5" y1="-82.4" x2="1318.9" y2="231.7" stroke="#1c1c1c" stroke-width="1.1"/>
<line x1="689.4" y1="-75.9" x2="1318.8" y2="232.8" stroke="#2c2c2c" stroke-width="0.9"/>
<polyline points="689.1,-115.0 680.3,-103.1 680.5,-82.4 689.4,-75.9" fill="none" stroke="#1c1c1c" stroke-width="1.1" stroke-linejoin="round"/>
<polygon points="1310.8,217.6 1319.2,213.8 1318.8,232.8 1310.7,227.7" fill="#a38e6f"/>
<polyline points="668.9,-92.5 674.1,-96.0 674.1,-108.9 680.4,-113.2 680.4,-100.2" fill="none" stroke="#1c1c1c" stroke-width="1.1" stroke-linejoin="round"/>
<polygon points="689.9,-9.1 1318.3,265.1 1318.2,272.2 681.1,1.9" fill="#c5bca4"/>
<polygon points="681.1,1.9 1318.2,272.2 1318.0,283.2 690.1,28.3 681.2,22.5" fill="#d4c9ab"/>
<line x1="689.9" y1="-9.1" x2="1318.3" y2="265.1" stroke="#1c1c1c" stroke-width="1.1"/>
<line x1="681.1" y1="1.9" x2="1318.2" y2="272.2" stroke="#1c1c1c" stroke-width="1.0"/>
<line x1="681.2" y1="22.5" x2="1318.0" y2="282.1" stroke="#1c1c1c" stroke-width="1.1"/>
<line x1="690.1" y1="28.3" x2="1318.0" y2="283.2" stroke="#2c2c2c" stroke-width="0.9"/>
<polyline points="689.9,-9.1 681.1,1.9 681.2,22.5 690.1,28.3" fill="none" stroke="#1c1c1c" stroke-width="1.1" stroke-linejoin="round"/>
<polygon points="1310.0,268.7 1318.3,265.1 1318.0,283.2 1309.8,278.8" fill="#a38e6f"/>
<polygon points="690.6,95.9 1317.5,316.1 1317.4,322.4 681.8,105.9" fill="#c5bca4"/>
<polygon points="681.8,105.9 1317.4,322.4 1317.2,333.4 690.8,131.6 681.9,126.5" fill="#d4c9ab"/>
<line x1="690.6" y1="95.9" x2="1317.5" y2="316.1" stroke="#1c1c1c" stroke-width="1.1"/>
<line x1="681.8" y1="105.9" x2="1317.4" y2="322.4" stroke="#1c1c1c" stroke-width="1.0"/>
<line x1="681.9" y1="126.5" x2="1317.2" y2="332.4" stroke="#1c1c1c" stroke-width="1.1"/>
<line x1="690.8" y1="131.6" x2="1317.2" y2="333.4" stroke="#2c2c2c" stroke-width="0.9"/>
<polyline points="690.6,95.9 681.8,105.9 681.9,126.5 690.8,131.6" fill="none" stroke="#1c1c1c" stroke-width="1.1" stroke-linejoin="round"/>
<polygon points="1309.2,319.6 1317.5,316.1 1317.2,333.4 1309.0,329.7" fill="#a38e6f"/>
<polyline points="670.4,112.4 675.5,110.1 675.5,97.2 681.8,94.3 681.8,107.3" fill="none" stroke="#1c1c1c" stroke-width="1.1" stroke-linejoin="round"/>
<polygon points="691.2,200.0 1316.6,366.8 1316.5,372.4 682.5,209.1" fill="#c5bca4"/>
<polygon points="682.5,209.1 1316.5,372.4 1316.4,383.7 691.5,234.7 682.7,229.7" fill="#d4c9ab"/>
<line x1="691.2" y1="200.0" x2="1316.6" y2="366.8" stroke="#1c1c1c" stroke-width="1.1"/>
<line x1="682.5" y1="209.1" x2="1316.5" y2="372.4" stroke="#1c1c1c" stroke-width="1.0"/>
<line x1="682.7" y1="229.7" x2="1316.4" y2="382.4" stroke="#1c1c1c" stroke-width="1.1"/>
<line x1="691.5" y1="234.7" x2="1316.4" y2="383.7" stroke="#2c2c2c" stroke-width="0.9"/>
<polyline points="691.2,200.0 682.5,209.1 682.7,229.7 691.5,234.7" fill="none" stroke="#1c1c1c" stroke-width="1.1" stroke-linejoin="round"/>
<polygon points="1308.3,370.2 1316.6,366.8 1316.4,383.7 1308.2,380.4" fill="#a38e6f"/>
<polygon points="691.9,303.3 1315.8,417.4 1315.7,422.1 683.2,311.5" fill="#c5bca4"/>
<polygon points="683.2,311.5 1315.7,422.1 1315.5,434.2 692.2,337.6 683.4,332.0" fill="#d4c9ab"/>
<line x1="691.9" y1="303.3" x2="1315.8" y2="417.4" stroke="#1c1c1c" stroke-width="1.1"/>
<line x1="683.2" y1="311.5" x2="1315.7" y2="422.1" stroke="#1c1c1c" stroke-width="1.0"/>
<line x1="683.4" y1="332.0" x2="1315.6" y2="432.1" stroke="#1c1c1c" stroke-width="1.1"/>
<line x1="692.2" y1="337.6" x2="1315.5" y2="434.2" stroke="#2c2c2c" stroke-width="0.9"/>
<polyline points="691.9,303.3 683.2,311.5 683.4,332.0 692.2,337.6" fill="none" stroke="#1c1c1c" stroke-width="1.1" stroke-linejoin="round"/>
<polygon points="1307.5,420.7 1315.8,417.4 1315.5,434.2 1307.4,430.8" fill="#a38e6f"/>
<polyline points="671.9,314.5 676.9,313.4 676.9,300.5 683.2,299.0 683.2,312.0" fill="none" stroke="#1c1c1c" stroke-width="1.1" stroke-linejoin="round"/>
<polygon points="692.6,405.8 1315.0,467.7 1314.9,471.7 683.9,413.1" fill="#c5bca4"/>
<polygon points="683.9,413.1 1314.9,471.7 1314.7,484.4 692.8,439.8 684.1,433.6" fill="#d4c9ab"/>
<line x1="692.6" y1="405.8" x2="1315.0" y2="467.7" stroke="#1c1c1c" stroke-width="1.1"/>
<line x1="683.9" y1="413.1" x2="1314.9" y2="471.7" stroke="#1c1c1c" stroke-width="1.0"/>
<line x1="684.1" y1="433.6" x2="1314.7" y2="481.7" stroke="#1c1c1c" stroke-width="1.1"/>
<line x1="692.8" y1="439.8" x2="1314.7" y2="484.4" stroke="#2c2c2c" stroke-width="0.9"/>
<polyline points="692.6,405.8 683.9,413.1 684.1,433.6 692.8,439.8" fill="none" stroke="#1c1c1c" stroke-width="1.1" stroke-linejoin="round"/>
<polygon points="1306.7,470.9 1315.0,467.7 1314.7,484.4 1306.5,481.1" fill="#a38e6f"/>
<polygon points="693.3,507.6 1314.1,517.9 1314.1,521.1 684.7,513.9" fill="#c5bca4"/>
<polygon points="684.7,513.9 1314.1,521.1 1313.9,534.5 693.5,541.2 684.8,534.4" fill="#d4c9ab"/>
<line x1="693.3" y1="507.6" x2="1314.1" y2="517.9" stroke="#1c1c1c" stroke-width="1.1"/>
<line x1="684.7" y1="513.9" x2="1314.1" y2="521.1" stroke="#1c1c1c" stroke-width="1.0"/>
<line x1="684.8" y1="534.4" x2="1313.9" y2="531.2" stroke="#1c1c1c" stroke-width="1.1"/>
<line x1="693.5" y1="541.2" x2="1313.9" y2="534.5" stroke="#2c2c2c" stroke-width="0.9"/>
<polyline points="693.3,507.6 684.7,513.9 684.8,534.4 693.5,541.2" fill="none" stroke="#1c1c1c" stroke-width="1.1" stroke-linejoin="round"/>
<polygon points="1305.9,521.0 1314.1,517.9 1313.9,534.5 1305.7,531.2" fill="#a38e6f"/>
<polyline points="673.4,514.0 678.4,514.0 678.4,501.1 684.7,500.9 684.7,513.9" fill="none" stroke="#1c1c1c" stroke-width="1.1" stroke-linejoin="round"/>
<polygon points="694.0,608.7 1313.3,568.0 1313.3,570.3 685.4,614.1" fill="#c5bca4"/>
<polygon points="685.4,614.1 1313.3,570.3 1313.0,584.4 694.2,641.9 685.5,634.6" fill="#d4c9ab"/>
<line x1="694.0" y1="608.7" x2="1313.3" y2="568.0" stroke="#1c1c1c" stroke-width="1.1"/>
<line x1="685.4" y1="614.1" x2="1313.3" y2="570.3" stroke="#1c1c1c" stroke-width="1.0"/>
<line x1="685.5" y1="634.6" x2="1313.1" y2="580.4" stroke="#1c1c1c" stroke-width="1.1"/>
<line x1="694.2" y1="641.9" x2="1313.0" y2="584.4" stroke="#2c2c2c" stroke-width="0.9"/>
<polyline points="694.0,608.7 685.4,614.1 685.5,634.6 694.2,641.9" fill="none" stroke="#1c1c1c" stroke-width="1.1" stroke-linejoin="round"/>
<polygon points="1305.1,570.9 1313.3,568.0 1313.0,584.4 1304.9,581.1" fill="#a38e6f"/>
<polygon points="694.6,709.1 1312.5,617.9 1312.5,619.5 686.1,713.6" fill="#c5bca4"/>
<polygon points="686.1,713.6 1312.5,619.5 1312.2,634.2 694.9,742.0 686.2,734.1" fill="#d4c9ab"/>
<line x1="694.6" y1="709.1" x2="1312.5" y2="617.9" stroke="#1c1c1c" stroke-width="1.1"/>
<line x1="686.1" y1="713.6" x2="1312.5" y2="619.5" stroke="#1c1c1c" stroke-width="1.0"/>
<line x1="686.2" y1="734.1" x2="1312.3" y2="629.6" stroke="#1c1c1c" stroke-width="1.1"/>
<line x1="694.9" y1="742.0" x2="1312.2" y2="634.2" stroke="#2c2c2c" stroke-width="0.9"/>
<polyline points="694.6,709.1 686.1,713.6 686.2,734.1 694.9,742.0" fill="none" stroke="#1c1c1c" stroke-width="1.1" stroke-linejoin="round"/>
<polygon points="1304.3,620.7 1312.5,617.9 1312.2,634.2 1304.1,630.9" fill="#a38e6f"/>
<polyline points="674.9,711.3 679.8,712.3 679.8,699.4 686.1,700.6 686.1,713.6" fill="none" stroke="#1c1c1c" stroke-width="1.1" stroke-linejoin="round"/>
<polygon points="695.3,809.0 1311.7,667.7 1311.7,668.5 686.7,812.5" fill="#c5bca4"/>
<polygon points="686.7,812.5 1311.7,668.5 1311.4,683.9 695.5,841.4 686.9,832.9" fill="#d4c9ab"/>
<line x1="695.3" y1="809.0" x2="1311.7" y2="667.7" stroke="#1c1c1c" stroke-width="1.1"/>
<line x1="686.7" y1="812.5" x2="1311.7" y2="668.5" stroke="#1c1c1c" stroke-width="1.0"/>
<line x1="686.9" y1="832.9" x2="1311.5" y2="678.6" stroke="#1c1c1c" stroke-width="1.1"/>
<line x1="695.5" y1="841.4" x2="1311.4" y2="683.9" stroke="#2c2c2c" stroke-width="0.9"/>
<polyline points="695.3,809.0 686.7,812.5 686.9,832.9 695.5,841.4" fill="none" stroke="#1c1c1c" stroke-width="1.1" stroke-linejoin="round"/>
<polygon points="1303.5,670.3 1311.7,667.7 1311.4,683.9 1303.3,680.6" fill="#a38e6f"/>
<polygon points="696.0,907.6 1310.9,717.1 1310.8,717.4 687.4,910.8" fill="#c5bca4"/>
<polygon points="687.4,910.8 1310.8,717.4 1310.6,733.5 696.2,940.3 687.6,931.3" fill="#d4c9ab"/>
<line x1="696.0" y1="907.6" x2="1310.9" y2="717.1" stroke="#1c1c1c" stroke-width="1.1"/>
<line x1="687.4" y1="910.8" x2="1310.8" y2="717.4" stroke="#1c1c1c" stroke-width="1.0"/>
<line x1="687.6" y1="931.3" x2="1310.7" y2="727.5" stroke="#1c1c1c" stroke-width="1.1"/>
<line x1="696.2" y1="940.3" x2="1310.6" y2="733.5" stroke="#2c2c2c" stroke-width="0.9"/>
<polyline points="696.0,907.6 687.4,910.8 687.6,931.3 696.2,940.3" fill="none" stroke="#1c1c1c" stroke-width="1.1" stroke-linejoin="round"/>
<polygon points="1302.7,719.9 1310.9,717.1 1310.6,733.5 1302.5,730.2" fill="#a38e6f"/>
<polyline points="676.3,906.6 681.1,908.6 681.1,895.7 687.4,898.3 687.4,911.3" fill="none" stroke="#1c1c1c" stroke-width="1.1" stroke-linejoin="round"/>
<polygon points="696.6,1004.7 1310.0,765.9 1310.0,766.2 688.1,1008.7" fill="#c5bca4"/>
<polygon points="688.1,1008.7 1310.0,766.2 1309.8,783.0 696.8,1038.7 688.3,1029.1" fill="#d4c9ab"/>
<line x1="696.6" y1="1004.7" x2="1310.0" y2="765.9" stroke="#1c1c1c" stroke-width="1.1"/>
<line x1="688.1" y1="1008.7" x2="1310.0" y2="766.2" stroke="#1c1c1c" stroke-width="1.0"/>
<line x1="688.3" y1="1029.1" x2="1309.9" y2="776.4" stroke="#1c1c1c" stroke-width="1.1"/>
<line x1="696.8" y1="1038.7" x2="1309.8" y2="783.0" stroke="#2c2c2c" stroke-width="0.9"/>
<polyline points="696.6,1004.7 688.1,1008.7 688.3,1029.1 696.8,1038.7" fill="none" stroke="#1c1c1c" stroke-width="1.1" stroke-linejoin="round"/>
<polygon points="1301.9,769.4 1310.0,765.9 1309.8,783.0 1301.7,779.7" fill="#a38e6f"/>
<polygon points="697.3,1101.4 1309.2,814.7 1309.2,815.0 688.8,1106.0" fill="#c5bca4"/>
<polygon points="688.8,1106.0 1309.2,815.0 1308.9,832.5 697.5,1136.6 688.9,1126.4" fill="#d4c9ab"/>
<line x1="697.3" y1="1101.4" x2="1309.2" y2="814.7" stroke="#1c1c1c" stroke-width="1.1"/>
<line x1="688.8" y1="1106.0" x2="1309.2" y2="815.0" stroke="#1c1c1c" stroke-width="1.0"/>
<line x1="688.9" y1="1126.4" x2="1309.1" y2="825.2" stroke="#1c1c1c" stroke-width="1.1"/>
<line x1="697.5" y1="1136.6" x2="1308.9" y2="832.5" stroke="#2c2c2c" stroke-width="0.9"/>
<polyline points="697.3,1101.4 688.8,1106.0 688.9,1126.4 697.5,1136.6" fill="none" stroke="#1c1c1c" stroke-width="1.1" stroke-linejoin="round"/>
<polygon points="1301.1,818.8 1309.2,814.7 1308.9,832.5 1300.9,829.2" fill="#a38e6f"/>
<polyline points="677.8,1100.4 682.5,1103.3 682.5,1090.4 688.8,1094.3 688.8,1107.3" fill="none" stroke="#1c1c1c" stroke-width="1.1" stroke-linejoin="round"/>
<polygon points="697.9,1197.7 1308.4,863.4 1308.4,863.7 689.5,1202.9" fill="#c5bca4"/>
<polygon points="689.5,1202.9 1308.4,863.7 1308.1,881.9 698.1,1234.1 689.6,1223.3" fill="#d4c9ab"/>
<line x1="697.9" y1="1197.7" x2="1308.4" y2="863.4" stroke="#1c1c1c" stroke-width="1.1"/>
<line x1="689.5" y1="1202.9" x2="1308.4" y2="863.7" stroke="#1c1c1c" stroke-width="1.0"/>
<line x1="689.6" y1="1223.3" x2="1308.3" y2="874.0" stroke="#1c1c1c" stroke-width="1.1"/>
<line x1="698.1" y1="1234.1" x2="1308.1" y2="881.9" stroke="#2c2c2c" stroke-width="0.9"/>
<polyline points="697.9,1197.7 689.5,1202.9 689.6,1223.3 698.1,1234.1" fill="none" stroke="#1c1c1c" stroke-width="1.1" stroke-linejoin="round"/>
<polygon points="1300.3,868.2 1308.4,863.4 1308.1,881.9 1300.1,878.6" fill="#a38e6f"/>
<polygon points="698.5,1293.5 1307.6,912.1 1307.6,912.4 690.1,1299.4" fill="#c5bca4"/>
<polygon points="690.1,1299.4 1307.6,912.4 1307.3,931.3 698.8,1331.2 690.3,1319.7" fill="#d4c9ab"/>
<line x1="698.5" y1="1293.5" x2="1307.6" y2="912.1" stroke="#1c1c1c" stroke-width="1.1"/>
<line x1="690.1" y1="1299.4" x2="1307.6" y2="912.4" stroke="#1c1c1c" stroke-width="1.0"/>
<line x1="690.3" y1="1319.7" x2="1307.5" y2="922.7" stroke="#1c1c1c" stroke-width="1.1"/>
<line x1="698.8" y1="1331.2" x2="1307.3" y2="931.3" stroke="#2c2c2c" stroke-width="0.9"/>
<polyline points="698.5,1293.5 690.1,1299.4 690.3,1319.7 698.8,1331.2" fill="none" stroke="#1c1c1c" stroke-width="1.1" stroke-linejoin="round"/>
<polygon points="1299.5,917.5 1307.6,912.1 1307.3,931.3 1299.3,927.9" fill="#a38e6f"/>
<polyline points="679.2,1292.9 683.9,1296.7 683.9,1283.8 690.2,1289.0 690.2,1302.0" fill="none" stroke="#1c1c1c" stroke-width="1.1" stroke-linejoin="round"/>
<polygon points="1333.8,-673.9 1549.7,-232.0 1525.1,769.2 1307.8,901.6" fill="#9e886a"/>
<polygon points="1333.8,-673.9 1338.1,-665.2 1312.0,899.1 1307.8,901.6" fill="#957f62"/>
<polygon points="1357.0,-626.5 1530.4,-271.6 1506.0,750.5 1331.5,844.0" fill="#aa9f8b"/>
<polygon points="1332.0,811.1 1506.5,727.2 1506.4,733.5 1331.9,819.9" fill="#b6ae9f"/>
<polygon points="1331.7,832.7 1506.2,742.5 1506.0,750.5 1331.5,844.0" fill="#9a8468"/>
<polygon points="1357.0,-626.5 1495.4,-343.2 1470.9,744.3 1332.0,811.1" fill="#b4c5b4"/>
<polygon points="1357.0,-626.5 1442.6,-451.2 1417.7,763.1 1332.2,803.0" fill="#e6e8e5"/>
<polygon points="1495.4,-343.2 1508.1,-317.3 1483.8,738.2 1470.9,744.3" fill="#a69d8e"/>
<polygon points="1508.1,-317.3 1517.8,-297.4 1493.7,733.4 1483.8,738.2" fill="#b3ab9c"/>
<polygon points="1517.8,-297.4 1530.4,-271.6 1506.5,727.2 1493.7,733.4" fill="#a39680"/>
<polygon points="1530.4,-271.6 1542.0,-247.8 1517.9,744.1 1506.0,750.5" fill="#8d785c"/>
<line x1="1338.1" y1="-665.2" x2="1312.0" y2="899.1" stroke="#1c1c1c" stroke-width="1.1"/>
<line x1="1357.0" y1="-626.5" x2="1331.5" y2="844.0" stroke="#1c1c1c" stroke-width="1.1"/>
<line x1="1530.4" y1="-271.6" x2="1506.0" y2="750.5" stroke="#1c1c1c" stroke-width="1.1"/>
<line x1="1542.0" y1="-247.8" x2="1517.9" y2="744.1" stroke="#1c1c1c" stroke-width="1.1"/>
<line x1="1549.7" y1="-232.0" x2="1525.1" y2="769.2" stroke="#1c1c1c" stroke-width="1.1"/>
<line x1="1442.6" y1="-451.2" x2="1417.5" y2="770.0" stroke="#555" stroke-width="0.8"/>
<line x1="1495.4" y1="-343.2" x2="1470.9" y2="744.3" stroke="#555" stroke-width="0.8"/>
<line x1="1508.1" y1="-317.3" x2="1483.8" y2="738.2" stroke="#555" stroke-width="0.8"/>
<line x1="1517.8" y1="-297.4" x2="1493.7" y2="733.4" stroke="#555" stroke-width="0.8"/>
<line x1="1332.2" y1="803.0" x2="1417.7" y2="763.1" stroke="#444" stroke-width="0.8"/>
<line x1="1332.0" y1="811.1" x2="1506.5" y2="727.2" stroke="#333" stroke-width="0.9"/>
<line x1="1331.9" y1="819.9" x2="1506.4" y2="733.5" stroke="#333" stroke-width="0.9"/>
<line x1="1331.7" y1="832.7" x2="1506.2" y2="742.5" stroke="#1c1c1c" stroke-width="1"/>
<line x1="1312.8" y1="854.0" x2="1525.8" y2="739.8" stroke="#1c1c1c" stroke-width="1.1"/>
<line x1="1307.8" y1="901.6" x2="1525.1" y2="769.2" stroke="#1c1c1c" stroke-width="1.1"/>
<polygon points="1549.7,-232.0 1625.2,-77.5 1590.3,1189.8 1510.8,1349.1" fill="#d4c9ab"/>
<polygon points="1543.4,26.5 1619.6,127.7 1619.4,135.3 1543.1,36.1" fill="#c5bca4"/>
<polygon points="1543.1,36.1 1619.4,135.3 1619.2,140.7 1543.0,42.8 1543.0,42.2" fill="#d4c9ab"/>
<line x1="1543.4" y1="26.5" x2="1619.6" y2="127.7" stroke="#1c1c1c" stroke-width="1.1"/>
<line x1="1543.1" y1="36.1" x2="1619.4" y2="135.3" stroke="#1c1c1c" stroke-width="1.0"/>
<line x1="1543.0" y1="42.2" x2="1619.2" y2="140.2" stroke="#1c1c1c" stroke-width="1.1"/>
<line x1="1543.0" y1="42.8" x2="1619.2" y2="140.7" stroke="#2c2c2c" stroke-width="0.9"/>
<polyline points="1543.4,26.5 1543.1,36.1 1543.0,42.2 1543.0,42.8" fill="none" stroke="#1c1c1c" stroke-width="1.1" stroke-linejoin="round"/>
<polygon points="1542.5,60.6 1618.8,154.8 1618.6,162.0 1542.3,69.7" fill="#c5bca4"/>
<polygon points="1542.3,69.7 1618.6,162.0 1618.5,167.4 1542.1,76.4 1542.1,75.8" fill="#d4c9ab"/>
<line x1="1542.5" y1="60.6" x2="1618.8" y2="154.8" stroke="#1c1c1c" stroke-width="1.1"/>
<line x1="1542.3" y1="69.7" x2="1618.6" y2="162.0" stroke="#1c1c1c" stroke-width="1.0"/>
<line x1="1542.1" y1="75.8" x2="1618.5" y2="166.9" stroke="#1c1c1c" stroke-width="1.1"/>
<line x1="1542.1" y1="76.4" x2="1618.5" y2="167.4" stroke="#2c2c2c" stroke-width="0.9"/>
<polyline points="1542.5,60.6 1542.3,69.7 1542.1,75.8 1542.1,76.4" fill="none" stroke="#1c1c1c" stroke-width="1.1" stroke-linejoin="round"/>
<polygon points="1541.7,94.5 1618.1,181.8 1617.9,188.6 1541.5,103.1" fill="#c5bca4"/>
<polygon points="1541.5,103.1 1617.9,188.6 1617.7,194.0 1541.3,109.8 1541.3,109.2" fill="#d4c9ab"/>
<line x1="1541.7" y1="94.5" x2="1618.1" y2="181.8" stroke="#1c1c1c" stroke-width="1.1"/>
<line x1="1541.5" y1="103.1" x2="1617.9" y2="188.6" stroke="#1c1c1c" stroke-width="1.0"/>
<line x1="1541.3" y1="109.2" x2="1617.8" y2="193.5" stroke="#1c1c1c" stroke-width="1.1"/>
<line x1="1541.3" y1="109.8" x2="1617.7" y2="194.0" stroke="#2c2c2c" stroke-width="0.9"/>
<polyline points="1541.7,94.5 1541.5,103.1 1541.3,109.2 1541.3,109.8" fill="none" stroke="#1c1c1c" stroke-width="1.1" stroke-linejoin="round"/>
<polygon points="1540.9,128.2 1617.3,208.6 1617.2,215.1 1540.7,136.3" fill="#c5bca4"/>
<polygon points="1540.7,136.3 1617.2,215.1 1617.0,220.5 1540.5,143.1 1540.5,142.4" fill="#d4c9ab"/>
<line x1="1540.9" y1="128.2" x2="1617.3" y2="208.6" stroke="#1c1c1c" stroke-width="1.1"/>
<line x1="1540.7" y1="136.3" x2="1617.2" y2="215.1" stroke="#1c1c1c" stroke-width="1.0"/>
<line x1="1540.5" y1="142.4" x2="1617.0" y2="220.0" stroke="#1c1c1c" stroke-width="1.1"/>
<line x1="1540.5" y1="143.1" x2="1617.0" y2="220.5" stroke="#2c2c2c" stroke-width="0.9"/>
<polyline points="1540.9,128.2 1540.7,136.3 1540.5,142.4 1540.5,143.1" fill="none" stroke="#1c1c1c" stroke-width="1.1" stroke-linejoin="round"/>
<polygon points="1540.0,161.7 1616.6,235.3 1616.4,241.4 1539.8,169.3" fill="#c5bca4"/>
<polygon points="1539.8,169.3 1616.4,241.4 1616.3,246.8 1539.7,176.1 1539.7,175.5" fill="#d4c9ab"/>
<line x1="1540.0" y1="161.7" x2="1616.6" y2="235.3" stroke="#1c1c1c" stroke-width="1.1"/>
<line x1="1539.8" y1="169.3" x2="1616.4" y2="241.4" stroke="#1c1c1c" stroke-width="1.0"/>
<line x1="1539.7" y1="175.5" x2="1616.3" y2="246.3" stroke="#1c1c1c" stroke-width="1.1"/>
<line x1="1539.7" y1="176.1" x2="1616.3" y2="246.8" stroke="#2c2c2c" stroke-width="0.9"/>
<polyline points="1540.0,161.7 1539.8,169.3 1539.7,175.5 1539.7,176.1" fill="none" stroke="#1c1c1c" stroke-width="1.1" stroke-linejoin="round"/>
<polygon points="1539.2,195.1 1615.9,261.9 1615.7,267.6 1539.0,202.1" fill="#c5bca4"/>
<polygon points="1539.0,202.1 1615.7,267.6 1615.6,273.1 1538.9,209.0 1538.9,208.4" fill="#d4c9ab"/>
<line x1="1539.2" y1="195.1" x2="1615.9" y2="261.9" stroke="#1c1c1c" stroke-width="1.1"/>
<line x1="1539.0" y1="202.1" x2="1615.7" y2="267.6" stroke="#1c1c1c" stroke-width="1.0"/>
<line x1="1538.9" y1="208.4" x2="1615.6" y2="272.5" stroke="#1c1c1c" stroke-width="1.1"/>
<line x1="1538.9" y1="209.0" x2="1615.6" y2="273.1" stroke="#2c2c2c" stroke-width="0.9"/>
<polyline points="1539.2,195.1 1539.0,202.1 1538.9,208.4 1538.9,209.0" fill="none" stroke="#1c1c1c" stroke-width="1.1" stroke-linejoin="round"/>
<polygon points="1538.4,228.3 1615.1,288.4 1615.0,293.6 1538.2,234.8" fill="#c5bca4"/>
<polygon points="1538.2,234.8 1615.0,293.6 1614.9,299.2 1538.1,241.8 1538.1,241.1" fill="#d4c9ab"/>
<line x1="1538.4" y1="228.3" x2="1615.1" y2="288.4" stroke="#1c1c1c" stroke-width="1.1"/>
<line x1="1538.2" y1="234.8" x2="1615.0" y2="293.6" stroke="#1c1c1c" stroke-width="1.0"/>
<line x1="1538.1" y1="241.1" x2="1614.9" y2="298.6" stroke="#1c1c1c" stroke-width="1.1"/>
<line x1="1538.1" y1="241.8" x2="1614.9" y2="299.2" stroke="#2c2c2c" stroke-width="0.9"/>
<polyline points="1538.4,228.3 1538.2,234.8 1538.1,241.1 1538.1,241.8" fill="none" stroke="#1c1c1c" stroke-width="1.1" stroke-linejoin="round"/>
<polygon points="1537.6,261.3 1614.4,314.8 1614.3,319.6 1537.4,267.4" fill="#c5bca4"/>
<polygon points="1537.4,267.4 1614.3,319.6 1614.1,325.1 1537.3,274.3 1537.3,273.7" fill="#d4c9ab"/>
<line x1="1537.6" y1="261.3" x2="1614.4" y2="314.8" stroke="#1c1c1c" stroke-width="1.1"/>
<line x1="1537.4" y1="267.4" x2="1614.3" y2="319.6" stroke="#1c1c1c" stroke-width="1.0"/>
<line x1="1537.3" y1="273.7" x2="1614.2" y2="324.6" stroke="#1c1c1c" stroke-width="1.1"/>
<line x1="1537.3" y1="274.3" x2="1614.1" y2="325.1" stroke="#2c2c2c" stroke-width="0.9"/>
<polyline points="1537.6,261.3 1537.4,267.4 1537.3,273.7 1537.3,274.3" fill="none" stroke="#1c1c1c" stroke-width="1.1" stroke-linejoin="round"/>
<polygon points="1536.8,294.2 1613.7,341.0 1613.6,345.5 1536.6,299.8" fill="#c5bca4"/>
<polygon points="1536.6,299.8 1613.6,345.5 1613.4,351.0 1536.5,306.8 1536.5,306.1" fill="#d4c9ab"/>
<line x1="1536.8" y1="294.2" x2="1613.7" y2="341.0" stroke="#1c1c1c" stroke-width="1.1"/>
<line x1="1536.6" y1="299.8" x2="1613.6" y2="345.5" stroke="#1c1c1c" stroke-width="1.0"/>
<line x1="1536.5" y1="306.1" x2="1613.4" y2="350.5" stroke="#1c1c1c" stroke-width="1.1"/>
<line x1="1536.5" y1="306.8" x2="1613.4" y2="351.0" stroke="#2c2c2c" stroke-width="0.9"/>
<polyline points="1536.8,294.2 1536.6,299.8 1536.5,306.1 1536.5,306.8" fill="none" stroke="#1c1c1c" stroke-width="1.1" stroke-linejoin="round"/>
<polygon points="1536.0,327.0 1613.0,367.2 1612.9,371.3 1535.8,332.1" fill="#c5bca4"/>
<polygon points="1535.8,332.1 1612.9,371.3 1612.7,376.8 1535.7,339.1 1535.7,338.4" fill="#d4c9ab"/>
<line x1="1536.0" y1="327.0" x2="1613.0" y2="367.2" stroke="#1c1c1c" stroke-width="1.1"/>
<line x1="1535.8" y1="332.1" x2="1612.9" y2="371.3" stroke="#1c1c1c" stroke-width="1.0"/>
<line x1="1535.7" y1="338.4" x2="1612.7" y2="376.3" stroke="#1c1c1c" stroke-width="1.1"/>
<line x1="1535.7" y1="339.1" x2="1612.7" y2="376.8" stroke="#2c2c2c" stroke-width="0.9"/>
<polyline points="1536.0,327.0 1535.8,332.1 1535.7,338.4 1535.7,339.1" fill="none" stroke="#1c1c1c" stroke-width="1.1" stroke-linejoin="round"/>
<polygon points="1535.2,359.7 1612.3,393.3 1612.2,396.9 1535.0,364.2" fill="#c5bca4"/>
<polygon points="1535.0,364.2 1612.2,396.9 1612.0,402.6 1534.9,371.3 1534.9,370.6" fill="#d4c9ab"/>
<line x1="1535.2" y1="359.7" x2="1612.3" y2="393.3" stroke="#1c1c1c" stroke-width="1.1"/>
<line x1="1535.0" y1="364.2" x2="1612.2" y2="396.9" stroke="#1c1c1c" stroke-width="1.0"/>
<line x1="1534.9" y1="370.6" x2="1612.0" y2="402.0" stroke="#1c1c1c" stroke-width="1.1"/>
<line x1="1534.9" y1="371.3" x2="1612.0" y2="402.6" stroke="#2c2c2c" stroke-width="0.9"/>
<polyline points="1535.2,359.7 1535.0,364.2 1534.9,370.6 1534.9,371.3" fill="none" stroke="#1c1c1c" stroke-width="1.1" stroke-linejoin="round"/>
<polygon points="1534.4,392.2 1611.5,419.3 1611.5,422.6 1534.3,396.3" fill="#c5bca4"/>
<polygon points="1534.3,396.3 1611.5,422.6 1611.3,428.2 1534.1,403.3 1534.1,402.6" fill="#d4c9ab"/>
<line x1="1534.4" y1="392.2" x2="1611.5" y2="419.3" stroke="#1c1c1c" stroke-width="1.1"/>
<line x1="1534.3" y1="396.3" x2="1611.5" y2="422.6" stroke="#1c1c1c" stroke-width="1.0"/>
<line x1="1534.1" y1="402.6" x2="1611.3" y2="427.7" stroke="#1c1c1c" stroke-width="1.1"/>
<line x1="1534.1" y1="403.3" x2="1611.3" y2="428.2" stroke="#2c2c2c" stroke-width="0.9"/>
<polyline points="1534.4,392.2 1534.3,396.3 1534.1,402.6 1534.1,403.3" fill="none" stroke="#1c1c1c" stroke-width="1.1" stroke-linejoin="round"/>
<polygon points="1533.6,424.7 1610.8,445.3 1610.8,448.1 1533.5,428.2" fill="#c5bca4"/>
<polygon points="1533.5,428.2 1610.8,448.1 1610.6,453.9 1533.3,435.5 1533.3,434.6" fill="#d4c9ab"/>
<line x1="1533.6" y1="424.7" x2="1610.8" y2="445.3" stroke="#1c1c1c" stroke-width="1.1"/>
<line x1="1533.5" y1="428.2" x2="1610.8" y2="448.1" stroke="#1c1c1c" stroke-width="1.0"/>
<line x1="1533.3" y1="434.6" x2="1610.6" y2="453.2" stroke="#1c1c1c" stroke-width="1.1"/>
<line x1="1533.3" y1="435.5" x2="1610.6" y2="453.9" stroke="#2c2c2c" stroke-width="0.9"/>
<polyline points="1533.6,424.7 1533.5,428.2 1533.3,434.6 1533.3,435.5" fill="none" stroke="#1c1c1c" stroke-width="1.1" stroke-linejoin="round"/>
<polygon points="1532.8,457.0 1610.1,471.2 1610.1,473.6 1532.7,460.1" fill="#c5bca4"/>
<polygon points="1532.7,460.1 1610.1,473.6 1609.9,479.8 1532.5,467.8 1532.5,466.5" fill="#d4c9ab"/>
<line x1="1532.8" y1="457.0" x2="1610.1" y2="471.2" stroke="#1c1c1c" stroke-width="1.1"/>
<line x1="1532.7" y1="460.1" x2="1610.1" y2="473.6" stroke="#1c1c1c" stroke-width="1.0"/>
<line x1="1532.5" y1="466.5" x2="1609.9" y2="478.7" stroke="#1c1c1c" stroke-width="1.1"/>
<line x1="1532.5" y1="467.8" x2="1609.9" y2="479.8" stroke="#2c2c2c" stroke-width="0.9"/>
<polyline points="1532.8,457.0 1532.7,460.1 1532.5,466.5 1532.5,467.8" fill="none" stroke="#1c1c1c" stroke-width="1.1" stroke-linejoin="round"/>
<polygon points="1532.0,489.3 1609.4,497.0 1609.4,499.0 1531.9,491.8" fill="#c5bca4"/>
<polygon points="1531.9,491.8 1609.4,499.0 1609.2,505.6 1531.7,500.0 1531.7,498.3" fill="#d4c9ab"/>
<line x1="1532.0" y1="489.3" x2="1609.4" y2="497.0" stroke="#1c1c1c" stroke-width="1.1"/>
<line x1="1531.9" y1="491.8" x2="1609.4" y2="499.0" stroke="#1c1c1c" stroke-width="1.0"/>
<line x1="1531.7" y1="498.3" x2="1609.2" y2="504.2" stroke="#1c1c1c" stroke-width="1.1"/>
<line x1="1531.7" y1="500.0" x2="1609.2" y2="505.6" stroke="#2c2c2c" stroke-width="0.9"/>
<polyline points="1532.0,489.3 1531.9,491.8 1531.7,498.3 1531.7,500.0" fill="none" stroke="#1c1c1c" stroke-width="1.1" stroke-linejoin="round"/>
<polygon points="1531.2,521.5 1608.7,522.8 1608.7,524.4 1531.1,523.6" fill="#c5bca4"/>
<polygon points="1531.1,523.6 1608.7,524.4 1608.5,531.4 1530.9,532.2 1531.0,530.0" fill="#d4c9ab"/>
<line x1="1531.2" y1="521.5" x2="1608.7" y2="522.8" stroke="#1c1c1c" stroke-width="1.1"/>
<line x1="1531.1" y1="523.6" x2="1608.7" y2="524.4" stroke="#1c1c1c" stroke-width="1.0"/>
<line x1="1531.0" y1="530.0" x2="1608.5" y2="529.6" stroke="#1c1c1c" stroke-width="1.1"/>
<line x1="1530.9" y1="532.2" x2="1608.5" y2="531.4" stroke="#2c2c2c" stroke-width="0.9"/>
<polyline points="1531.2,521.5 1531.1,523.6 1531.0,530.0 1530.9,532.2" fill="none" stroke="#1c1c1c" stroke-width="1.1" stroke-linejoin="round"/>
<polygon points="1530.4,553.7 1608.0,548.6 1608.0,549.8 1530.3,555.2" fill="#c5bca4"/>
<polygon points="1530.3,555.2 1608.0,549.8 1607.8,557.1 1530.1,564.3 1530.2,561.7" fill="#d4c9ab"/>
<line x1="1530.4" y1="553.7" x2="1608.0" y2="548.6" stroke="#1c1c1c" stroke-width="1.1"/>
<line x1="1530.3" y1="555.2" x2="1608.0" y2="549.8" stroke="#1c1c1c" stroke-width="1.0"/>
<line x1="1530.2" y1="561.7" x2="1607.8" y2="555.0" stroke="#1c1c1c" stroke-width="1.1"/>
<line x1="1530.1" y1="564.3" x2="1607.8" y2="557.1" stroke="#2c2c2c" stroke-width="0.9"/>
<polyline points="1530.4,553.7 1530.3,555.2 1530.2,561.7 1530.1,564.3" fill="none" stroke="#1c1c1c" stroke-width="1.1" stroke-linejoin="round"/>
<polygon points="1529.6,585.8 1607.3,574.3 1607.3,575.1 1529.6,586.8" fill="#c5bca4"/>
<polygon points="1529.6,586.8 1607.3,575.1 1607.1,582.8 1529.3,596.3 1529.4,593.4" fill="#d4c9ab"/>
<line x1="1529.6" y1="585.8" x2="1607.3" y2="574.3" stroke="#1c1c1c" stroke-width="1.1"/>
<line x1="1529.6" y1="586.8" x2="1607.3" y2="575.1" stroke="#1c1c1c" stroke-width="1.0"/>
<line x1="1529.4" y1="593.4" x2="1607.1" y2="580.4" stroke="#1c1c1c" stroke-width="1.1"/>
<line x1="1529.3" y1="596.3" x2="1607.1" y2="582.8" stroke="#2c2c2c" stroke-width="0.9"/>
<polyline points="1529.6,585.8 1529.6,586.8 1529.4,593.4 1529.3,596.3" fill="none" stroke="#1c1c1c" stroke-width="1.1" stroke-linejoin="round"/>
<polygon points="1528.8,617.9 1606.6,600.1 1606.6,600.5 1528.8,618.4" fill="#c5bca4"/>
<polygon points="1528.8,618.4 1606.6,600.5 1606.3,608.5 1528.5,628.4 1528.6,625.0" fill="#d4c9ab"/>
<line x1="1528.8" y1="617.9" x2="1606.6" y2="600.1" stroke="#1c1c1c" stroke-width="1.1"/>
<line x1="1528.8" y1="618.4" x2="1606.6" y2="600.5" stroke="#1c1c1c" stroke-width="1.0"/>
<line x1="1528.6" y1="625.0" x2="1606.4" y2="605.7" stroke="#1c1c1c" stroke-width="1.1"/>
<line x1="1528.5" y1="628.4" x2="1606.3" y2="608.5" stroke="#2c2c2c" stroke-width="0.9"/>
<polyline points="1528.8,617.9 1528.8,618.4 1528.6,625.0 1528.5,628.4" fill="none" stroke="#1c1c1c" stroke-width="1.1" stroke-linejoin="round"/>
<polygon points="1528.0,649.8 1605.9,625.6 1605.9,625.8 1528.0,650.0" fill="#c5bca4"/>
<polygon points="1528.0,650.0 1605.9,625.8 1605.6,634.2 1527.8,660.4 1527.9,656.5" fill="#d4c9ab"/>
<line x1="1528.0" y1="649.8" x2="1605.9" y2="625.6" stroke="#1c1c1c" stroke-width="1.1"/>
<line x1="1528.0" y1="650.0" x2="1605.9" y2="625.8" stroke="#1c1c1c" stroke-width="1.0"/>
<line x1="1527.9" y1="656.5" x2="1605.7" y2="631.1" stroke="#1c1c1c" stroke-width="1.1"/>
<line x1="1527.8" y1="660.4" x2="1605.6" y2="634.2" stroke="#2c2c2c" stroke-width="0.9"/>
<polyline points="1528.0,649.8 1528.0,650.0 1527.9,656.5 1527.8,660.4" fill="none" stroke="#1c1c1c" stroke-width="1.1" stroke-linejoin="round"/>
<polygon points="1527.2,681.3 1605.2,651.0 1605.2,651.1 1527.2,681.5" fill="#c5bca4"/>
<polygon points="1527.2,681.5 1605.2,651.1 1604.9,659.9 1527.0,692.4 1527.1,688.1" fill="#d4c9ab"/>
<line x1="1527.2" y1="681.3" x2="1605.2" y2="651.0" stroke="#1c1c1c" stroke-width="1.1"/>
<line x1="1527.2" y1="681.5" x2="1605.2" y2="651.1" stroke="#1c1c1c" stroke-width="1.0"/>
<line x1="1527.1" y1="688.1" x2="1605.0" y2="656.4" stroke="#1c1c1c" stroke-width="1.1"/>
<line x1="1527.0" y1="692.4" x2="1604.9" y2="659.9" stroke="#2c2c2c" stroke-width="0.9"/>
<polyline points="1527.2,681.3 1527.2,681.5 1527.1,688.1 1527.0,692.4" fill="none" stroke="#1c1c1c" stroke-width="1.1" stroke-linejoin="round"/>
<polygon points="1526.5,712.9 1604.5,676.3 1604.5,676.5 1526.5,713.1" fill="#c5bca4"/>
<polygon points="1526.5,713.1 1604.5,676.5 1604.2,685.6 1526.2,724.4 1526.3,719.7" fill="#d4c9ab"/>
<line x1="1526.5" y1="712.9" x2="1604.5" y2="676.3" stroke="#1c1c1c" stroke-width="1.1"/>
<line x1="1526.5" y1="713.1" x2="1604.5" y2="676.5" stroke="#1c1c1c" stroke-width="1.0"/>
<line x1="1526.3" y1="719.7" x2="1604.3" y2="681.8" stroke="#1c1c1c" stroke-width="1.1"/>
<line x1="1526.2" y1="724.4" x2="1604.2" y2="685.6" stroke="#2c2c2c" stroke-width="0.9"/>
<polyline points="1526.5,712.9 1526.5,713.1 1526.3,719.7 1526.2,724.4" fill="none" stroke="#1c1c1c" stroke-width="1.1" stroke-linejoin="round"/>
<polygon points="1525.7,744.4 1603.8,701.7 1603.8,701.8 1525.7,744.6" fill="#c5bca4"/>
<polygon points="1525.7,744.6 1603.8,701.8 1603.5,711.3 1525.4,756.4 1525.5,751.3" fill="#d4c9ab"/>
<line x1="1525.7" y1="744.4" x2="1603.8" y2="701.7" stroke="#1c1c1c" stroke-width="1.1"/>
<line x1="1525.7" y1="744.6" x2="1603.8" y2="701.8" stroke="#1c1c1c" stroke-width="1.0"/>
<line x1="1525.5" y1="751.3" x2="1603.6" y2="707.2" stroke="#1c1c1c" stroke-width="1.1"/>
<line x1="1525.4" y1="756.4" x2="1603.5" y2="711.3" stroke="#2c2c2c" stroke-width="0.9"/>
<polyline points="1525.7,744.4 1525.7,744.6 1525.5,751.3 1525.4,756.4" fill="none" stroke="#1c1c1c" stroke-width="1.1" stroke-linejoin="round"/>
<polygon points="1524.9,776.0 1603.1,727.1 1603.1,727.2 1524.9,776.2" fill="#c5bca4"/>
<polygon points="1524.9,776.2 1603.1,727.2 1602.8,737.1 1524.6,788.5 1524.7,782.9" fill="#d4c9ab"/>
<line x1="1524.9" y1="776.0" x2="1603.1" y2="727.1" stroke="#1c1c1c" stroke-width="1.1"/>
<line x1="1524.9" y1="776.2" x2="1603.1" y2="727.2" stroke="#1c1c1c" stroke-width="1.0"/>
<line x1="1524.7" y1="782.9" x2="1602.9" y2="732.6" stroke="#1c1c1c" stroke-width="1.1"/>
<line x1="1524.6" y1="788.5" x2="1602.8" y2="737.1" stroke="#2c2c2c" stroke-width="0.9"/>
<polyline points="1524.9,776.0 1524.9,776.2 1524.7,782.9 1524.6,788.5" fill="none" stroke="#1c1c1c" stroke-width="1.1" stroke-linejoin="round"/>
<line x1="1618.7" y1="-90.8" x2="1613.0" y2="119.0" stroke="#2a2a2a" stroke-width="1.0"/>
<polygon points="1614.0,128.4 1619.6,127.7 1619.2,140.7 1613.9,133.3" fill="#a38e6f"/>
<line x1="1608.4" y1="121.1" x2="1608.3" y2="126.1" stroke="#2a2a2a" stroke-width="1.0"/>
<line x1="1612.6" y1="132.2" x2="1612.2" y2="146.7" stroke="#2a2a2a" stroke-width="1.0"/>
<polygon points="1613.3,155.6 1618.8,154.8 1618.5,167.4 1613.2,160.5" fill="#a38e6f"/>
<line x1="1607.7" y1="148.8" x2="1607.5" y2="153.8" stroke="#2a2a2a" stroke-width="1.0"/>
<line x1="1611.9" y1="159.6" x2="1611.5" y2="174.3" stroke="#2a2a2a" stroke-width="1.0"/>
<polygon points="1612.6,182.7 1618.1,181.8 1617.7,194.0 1612.4,187.6" fill="#a38e6f"/>
<line x1="1606.9" y1="176.4" x2="1606.8" y2="181.4" stroke="#2a2a2a" stroke-width="1.0"/>
<line x1="1611.2" y1="186.8" x2="1610.7" y2="201.7" stroke="#2a2a2a" stroke-width="1.0"/>
<polygon points="1611.8,209.6 1617.3,208.6 1617.0,220.5 1611.7,214.6" fill="#a38e6f"/>
<line x1="1606.2" y1="203.8" x2="1606.1" y2="208.8" stroke="#2a2a2a" stroke-width="1.0"/>
<line x1="1610.4" y1="213.8" x2="1610.0" y2="229.0" stroke="#2a2a2a" stroke-width="1.0"/>
<polygon points="1611.1,236.3 1616.6,235.3 1616.3,246.8 1611.0,241.4" fill="#a38e6f"/>
<line x1="1605.5" y1="231.0" x2="1605.3" y2="236.1" stroke="#2a2a2a" stroke-width="1.0"/>
<line x1="1609.7" y1="240.7" x2="1609.3" y2="256.2" stroke="#2a2a2a" stroke-width="1.0"/>
<polygon points="1610.4,263.0 1615.9,261.9 1615.6,273.1 1610.2,268.0" fill="#a38e6f"/>
<line x1="1604.7" y1="258.2" x2="1604.6" y2="263.3" stroke="#2a2a2a" stroke-width="1.0"/>
<line x1="1609.0" y1="267.5" x2="1608.5" y2="283.2" stroke="#2a2a2a" stroke-width="1.0"/>
<polygon points="1609.6,289.5 1615.1,288.4 1614.9,299.2 1609.5,294.6" fill="#a38e6f"/>
<line x1="1604.0" y1="285.2" x2="1603.8" y2="290.4" stroke="#2a2a2a" stroke-width="1.0"/>
<line x1="1608.2" y1="294.2" x2="1607.8" y2="310.2" stroke="#2a2a2a" stroke-width="1.0"/>
<polygon points="1608.9,316.0 1614.4,314.8 1614.1,325.1 1608.8,321.1" fill="#a38e6f"/>
<line x1="1603.3" y1="312.1" x2="1603.1" y2="317.3" stroke="#2a2a2a" stroke-width="1.0"/>
<line x1="1607.5" y1="320.8" x2="1607.1" y2="337.0" stroke="#2a2a2a" stroke-width="1.0"/>
<polygon points="1608.2,342.3 1613.7,341.0 1613.4,351.0 1608.1,347.4" fill="#a38e6f"/>
<line x1="1602.5" y1="338.9" x2="1602.4" y2="344.1" stroke="#2a2a2a" stroke-width="1.0"/>
<line x1="1606.8" y1="347.2" x2="1606.3" y2="363.7" stroke="#2a2a2a" stroke-width="1.0"/>
<polygon points="1607.5,368.5 1613.0,367.2 1612.7,376.8 1607.3,373.7" fill="#a38e6f"/>
<line x1="1601.8" y1="365.6" x2="1601.7" y2="370.9" stroke="#2a2a2a" stroke-width="1.0"/>
<line x1="1606.1" y1="373.6" x2="1605.6" y2="390.4" stroke="#2a2a2a" stroke-width="1.0"/>
<polygon points="1606.8,394.7 1612.3,393.3 1612.0,402.6 1606.6,399.8" fill="#a38e6f"/>
<line x1="1601.1" y1="392.3" x2="1600.9" y2="397.5" stroke="#2a2a2a" stroke-width="1.0"/>
<line x1="1605.3" y1="399.9" x2="1604.9" y2="417.0" stroke="#2a2a2a" stroke-width="1.0"/>
<polygon points="1606.1,420.7 1611.5,419.3 1611.3,428.2 1605.9,425.9" fill="#a38e6f"/>
<line x1="1600.4" y1="418.8" x2="1600.2" y2="424.1" stroke="#2a2a2a" stroke-width="1.0"/>
<line x1="1604.6" y1="426.1" x2="1604.2" y2="443.5" stroke="#2a2a2a" stroke-width="1.0"/>
<polygon points="1605.4,446.7 1610.8,445.3 1610.6,453.9 1605.2,451.9" fill="#a38e6f"/>
<line x1="1599.7" y1="445.3" x2="1599.5" y2="450.6" stroke="#2a2a2a" stroke-width="1.0"/>
<line x1="1603.9" y1="452.4" x2="1603.4" y2="469.9" stroke="#2a2a2a" stroke-width="1.0"/>
<polygon points="1604.6,472.7 1610.1,471.2 1609.9,479.8 1604.5,477.9" fill="#a38e6f"/>
<line x1="1598.9" y1="471.7" x2="1598.8" y2="477.0" stroke="#2a2a2a" stroke-width="1.0"/>
<line x1="1603.2" y1="478.8" x2="1602.7" y2="496.3" stroke="#2a2a2a" stroke-width="1.0"/>
<polygon points="1603.9,498.5 1609.4,497.0 1609.2,505.6 1603.8,503.8" fill="#a38e6f"/>
<line x1="1598.2" y1="498.0" x2="1598.1" y2="503.4" stroke="#2a2a2a" stroke-width="1.0"/>
<line x1="1602.5" y1="505.1" x2="1602.0" y2="522.7" stroke="#2a2a2a" stroke-width="1.0"/>
<polygon points="1603.2,524.4 1608.7,522.8 1608.5,531.4 1603.1,529.7" fill="#a38e6f"/>
<line x1="1597.5" y1="524.3" x2="1597.4" y2="529.7" stroke="#2a2a2a" stroke-width="1.0"/>
<line x1="1601.8" y1="531.4" x2="1601.3" y2="549.0" stroke="#2a2a2a" stroke-width="1.0"/>
<polygon points="1602.5,550.2 1608.0,548.6 1607.8,557.1 1602.4,555.5" fill="#a38e6f"/>
<line x1="1596.8" y1="550.6" x2="1596.7" y2="556.0" stroke="#2a2a2a" stroke-width="1.0"/>
<line x1="1601.0" y1="557.7" x2="1600.6" y2="575.3" stroke="#2a2a2a" stroke-width="1.0"/>
<polygon points="1601.8,576.0 1607.3,574.3 1607.1,582.8 1601.7,581.3" fill="#a38e6f"/>
<line x1="1596.1" y1="576.8" x2="1595.9" y2="582.2" stroke="#2a2a2a" stroke-width="1.0"/>
<line x1="1600.3" y1="584.0" x2="1599.8" y2="601.6" stroke="#2a2a2a" stroke-width="1.0"/>
<polygon points="1601.1,601.7 1606.6,600.1 1606.3,608.5 1601.0,607.1" fill="#a38e6f"/>
<line x1="1595.4" y1="603.1" x2="1595.2" y2="608.5" stroke="#2a2a2a" stroke-width="1.0"/>
<line x1="1599.6" y1="610.2" x2="1599.1" y2="627.7" stroke="#2a2a2a" stroke-width="1.0"/>
<polygon points="1600.4,627.5 1605.9,625.6 1605.6,634.2 1600.3,632.9" fill="#a38e6f"/>
<line x1="1594.7" y1="629.3" x2="1594.5" y2="634.7" stroke="#2a2a2a" stroke-width="1.0"/>
<line x1="1598.9" y1="636.4" x2="1598.4" y2="653.6" stroke="#2a2a2a" stroke-width="1.0"/>
<polygon points="1599.7,653.3 1605.2,651.0 1604.9,659.9 1599.6,658.7" fill="#a38e6f"/>
<line x1="1594.0" y1="655.5" x2="1593.8" y2="661.0" stroke="#2a2a2a" stroke-width="1.0"/>
<line x1="1598.2" y1="662.7" x2="1597.7" y2="679.5" stroke="#2a2a2a" stroke-width="1.0"/>
<polygon points="1599.0,679.0 1604.5,676.3 1604.2,685.6 1598.9,684.5" fill="#a38e6f"/>
<line x1="1593.2" y1="681.7" x2="1593.1" y2="687.3" stroke="#2a2a2a" stroke-width="1.0"/>
<line x1="1597.5" y1="688.9" x2="1597.0" y2="705.4" stroke="#2a2a2a" stroke-width="1.0"/>
<polygon points="1598.3,704.8 1603.8,701.7 1603.5,711.3 1598.2,710.3" fill="#a38e6f"/>
<line x1="1592.5" y1="708.0" x2="1592.4" y2="713.5" stroke="#2a2a2a" stroke-width="1.0"/>
<line x1="1596.7" y1="715.2" x2="1596.3" y2="731.3" stroke="#2a2a2a" stroke-width="1.0"/>
<polygon points="1597.6,730.7 1603.1,727.1 1602.8,737.1 1597.4,736.1" fill="#a38e6f"/>
<line x1="1591.8" y1="734.3" x2="1591.7" y2="739.9" stroke="#2a2a2a" stroke-width="1.0"/>
<line x1="1596.0" y1="741.6" x2="1596.5" y2="725.7" stroke="#2a2a2a" stroke-width="1.0"/>
<clipPath id="cbelow"><polygon points="1309.3,900.7 1525.1,769.2 1603.2,721.6 1590.3,1189.8 1294.7,1781.6"/></clipPath>
<g clip-path="url(#cbelow)">
<polygon points="1309.3,900.7 1525.1,769.2 1603.2,721.6 1590.3,1189.8 1294.7,1781.6" fill="#d4c9ab"/>
<line x1="1288.0" y1="921.6" x2="1595.5" y2="730.4" stroke="#1c1c1c" stroke-width="1.1"/>
<polygon points="1276.6,1032.6 1601.7,778.1 1601.7,778.2 1276.6,1032.9" fill="#c5bca4"/>
<polygon points="1276.6,1032.9 1601.7,778.2 1601.4,788.8 1276.3,1054.1 1276.4,1043.8" fill="#d4c9ab"/>
<line x1="1276.6" y1="1032.6" x2="1601.7" y2="778.1" stroke="#1c1c1c" stroke-width="1.1"/>
<line x1="1276.6" y1="1032.9" x2="1601.7" y2="778.2" stroke="#1c1c1c" stroke-width="1.0"/>
<line x1="1276.4" y1="1043.8" x2="1601.5" y2="783.6" stroke="#1c1c1c" stroke-width="1.1"/>
<line x1="1276.3" y1="1054.1" x2="1601.4" y2="788.8" stroke="#2c2c2c" stroke-width="0.9"/>
<polyline points="1276.6,1032.6 1276.6,1032.9 1276.4,1043.8 1276.3,1054.1" fill="none" stroke="#1c1c1c" stroke-width="1.1" stroke-linejoin="round"/>
<polygon points="1275.8,1083.7 1601.0,803.6 1601.0,803.8 1275.8,1084.0" fill="#c5bca4"/>
<polygon points="1275.8,1084.0 1601.0,803.8 1600.7,814.8 1275.5,1105.9 1275.6,1094.8" fill="#d4c9ab"/>
<line x1="1275.8" y1="1083.7" x2="1601.0" y2="803.6" stroke="#1c1c1c" stroke-width="1.1"/>
<line x1="1275.8" y1="1084.0" x2="1601.0" y2="803.8" stroke="#1c1c1c" stroke-width="1.0"/>
<line x1="1275.6" y1="1094.8" x2="1600.8" y2="809.2" stroke="#1c1c1c" stroke-width="1.1"/>
<line x1="1275.5" y1="1105.9" x2="1600.7" y2="814.8" stroke="#2c2c2c" stroke-width="0.9"/>
<polyline points="1275.8,1083.7 1275.8,1084.0 1275.6,1094.8 1275.5,1105.9" fill="none" stroke="#1c1c1c" stroke-width="1.1" stroke-linejoin="round"/>
<polygon points="1275.0,1134.8 1600.3,829.3 1600.3,829.4 1275.0,1135.1" fill="#c5bca4"/>
<polygon points="1275.0,1135.1 1600.3,829.4 1600.0,840.8 1274.7,1157.7 1274.9,1146.0" fill="#d4c9ab"/>
<line x1="1275.0" y1="1134.8" x2="1600.3" y2="829.3" stroke="#1c1c1c" stroke-width="1.1"/>
<line x1="1275.0" y1="1135.1" x2="1600.3" y2="829.4" stroke="#1c1c1c" stroke-width="1.0"/>
<line x1="1274.9" y1="1146.0" x2="1600.1" y2="834.9" stroke="#1c1c1c" stroke-width="1.1"/>
<line x1="1274.7" y1="1157.7" x2="1600.0" y2="840.8" stroke="#2c2c2c" stroke-width="0.9"/>
<polyline points="1275.0,1134.8 1275.0,1135.1 1274.9,1146.0 1274.7,1157.7" fill="none" stroke="#1c1c1c" stroke-width="1.1" stroke-linejoin="round"/>
<polygon points="1274.2,1186.0 1599.6,855.0 1599.6,855.2 1274.2,1186.3" fill="#c5bca4"/>
<polygon points="1274.2,1186.3 1599.6,855.2 1599.2,866.9 1273.9,1209.6 1274.1,1197.2" fill="#d4c9ab"/>
<line x1="1274.2" y1="1186.0" x2="1599.6" y2="855.0" stroke="#1c1c1c" stroke-width="1.1"/>
<line x1="1274.2" y1="1186.3" x2="1599.6" y2="855.2" stroke="#1c1c1c" stroke-width="1.0"/>
<line x1="1274.1" y1="1197.2" x2="1599.4" y2="860.7" stroke="#1c1c1c" stroke-width="1.1"/>
<line x1="1273.9" y1="1209.6" x2="1599.2" y2="866.9" stroke="#2c2c2c" stroke-width="0.9"/>
<polyline points="1274.2,1186.0 1274.2,1186.3 1274.1,1197.2 1273.9,1209.6" fill="none" stroke="#1c1c1c" stroke-width="1.1" stroke-linejoin="round"/>
<polygon points="1273.5,1237.3 1598.8,880.9 1598.8,881.0 1273.4,1237.6" fill="#c5bca4"/>
<polygon points="1273.4,1237.6 1598.8,881.0 1598.5,893.2 1273.1,1261.7 1273.3,1248.5" fill="#d4c9ab"/>
<line x1="1273.5" y1="1237.3" x2="1598.8" y2="880.9" stroke="#1c1c1c" stroke-width="1.1"/>
<line x1="1273.4" y1="1237.6" x2="1598.8" y2="881.0" stroke="#1c1c1c" stroke-width="1.0"/>
<line x1="1273.3" y1="1248.5" x2="1598.7" y2="886.5" stroke="#1c1c1c" stroke-width="1.1"/>
<line x1="1273.1" y1="1261.7" x2="1598.5" y2="893.2" stroke="#2c2c2c" stroke-width="0.9"/>
<polyline points="1273.5,1237.3 1273.4,1237.6 1273.3,1248.5 1273.1,1261.7" fill="none" stroke="#1c1c1c" stroke-width="1.1" stroke-linejoin="round"/>
<polygon points="1272.7,1288.7 1598.1,906.8 1598.1,907.0 1272.7,1289.0" fill="#c5bca4"/>
<polygon points="1272.7,1289.0 1598.1,907.0 1597.8,919.5 1272.3,1313.8 1272.5,1300.0" fill="#d4c9ab"/>
<line x1="1272.7" y1="1288.7" x2="1598.1" y2="906.8" stroke="#1c1c1c" stroke-width="1.1"/>
<line x1="1272.7" y1="1289.0" x2="1598.1" y2="907.0" stroke="#1c1c1c" stroke-width="1.0"/>
<line x1="1272.5" y1="1300.0" x2="1598.0" y2="912.5" stroke="#1c1c1c" stroke-width="1.1"/>
<line x1="1272.3" y1="1313.8" x2="1597.8" y2="919.5" stroke="#2c2c2c" stroke-width="0.9"/>
<polyline points="1272.7,1288.7 1272.7,1289.0 1272.5,1300.0 1272.3,1313.8" fill="none" stroke="#1c1c1c" stroke-width="1.1" stroke-linejoin="round"/>
<line x1="1596.5" y1="725.7" x2="1594.9" y2="783.4" stroke="#2a2a2a" stroke-width="1.0"/>
<polygon points="1596.2,782.5 1601.7,778.1 1601.4,788.8 1596.0,788.0" fill="#a38e6f"/>
<line x1="1590.4" y1="787.1" x2="1590.2" y2="792.7" stroke="#2a2a2a" stroke-width="1.0"/>
<line x1="1594.6" y1="794.4" x2="1594.2" y2="809.5" stroke="#2a2a2a" stroke-width="1.0"/>
<polygon points="1595.5,808.5 1601.0,803.6 1600.7,814.8 1595.3,814.1" fill="#a38e6f"/>
<line x1="1589.7" y1="813.5" x2="1589.5" y2="819.2" stroke="#2a2a2a" stroke-width="1.0"/>
<line x1="1593.9" y1="820.9" x2="1593.5" y2="835.7" stroke="#2a2a2a" stroke-width="1.0"/>
<polygon points="1594.8,834.6 1600.3,829.3 1600.0,840.8 1594.6,840.2" fill="#a38e6f"/>
<line x1="1589.0" y1="840.1" x2="1588.8" y2="845.7" stroke="#2a2a2a" stroke-width="1.0"/>
<line x1="1593.1" y1="847.4" x2="1592.7" y2="862.0" stroke="#2a2a2a" stroke-width="1.0"/>
<polygon points="1594.0,860.8 1599.6,855.0 1599.2,866.9 1593.9,866.4" fill="#a38e6f"/>
<line x1="1588.2" y1="866.7" x2="1588.1" y2="872.4" stroke="#2a2a2a" stroke-width="1.0"/>
<line x1="1592.4" y1="874.1" x2="1592.0" y2="888.3" stroke="#2a2a2a" stroke-width="1.0"/>
<polygon points="1593.3,887.1 1598.8,880.9 1598.5,893.2 1593.2,892.7" fill="#a38e6f"/>
<line x1="1587.5" y1="893.5" x2="1587.4" y2="899.2" stroke="#2a2a2a" stroke-width="1.0"/>
<line x1="1591.7" y1="900.9" x2="1591.3" y2="914.8" stroke="#2a2a2a" stroke-width="1.0"/>
<polygon points="1592.6,913.5 1598.1,906.8 1597.8,919.5 1592.5,919.1" fill="#a38e6f"/>
<line x1="1586.8" y1="920.3" x2="1586.6" y2="926.0" stroke="#2a2a2a" stroke-width="1.0"/>
<line x1="1591.0" y1="927.8" x2="1583.4" y2="1203.7" stroke="#2a2a2a" stroke-width="1.0"/>
<line x1="1405.6" y1="848.5" x2="1403.9" y2="932.9" stroke="#1c1c1c" stroke-width="1"/>
<line x1="1403.5" y1="950.3" x2="1390.6" y2="1589.6" stroke="#1c1c1c" stroke-width="1"/>
<polyline points="1396.4,947.8 1403.5,950.3" fill="none" stroke="#1c1c1c" stroke-width="1" stroke-linejoin="round"/>
</g>
<polygon points="1625.2,-77.5 1630.6,-66.5 1596.1,1178.4 1590.3,1189.8" fill="#a08a6a"/>
<line x1="1625.2" y1="-77.5" x2="1590.3" y2="1189.8" stroke="#1c1c1c" stroke-width="1.1"/>
<line x1="1630.6" y1="-66.5" x2="1596.1" y2="1178.4" stroke="#1c1c1c" stroke-width="1.1"/>
<polygon points="1630.6,-66.5 1702.5,80.8 1673.8,1022.9 1596.1,1178.4" fill="#a8957a"/>
<polygon points="1626.9,64.2 1699.5,178.7 1698.1,225.1 1625.2,126.1" fill="#c6b898"/>
<polygon points="1624.6,146.9 1697.6,240.8 1697.3,251.2 1624.3,160.9" fill="#b9a887"/>
<line x1="1626.5" y1="79.7" x2="1699.2" y2="190.3" stroke="#1e1e1e" stroke-width="1.6"/>
<line x1="1626.3" y1="88.9" x2="1699.0" y2="197.2" stroke="#1e1e1e" stroke-width="1.0"/>
<line x1="1626.0" y1="98.3" x2="1698.7" y2="204.2" stroke="#1e1e1e" stroke-width="1.6"/>
<line x1="1625.8" y1="106.5" x2="1698.6" y2="210.4" stroke="#1e1e1e" stroke-width="1.0"/>
<line x1="1625.5" y1="114.8" x2="1698.4" y2="216.7" stroke="#1e1e1e" stroke-width="1.0"/>
<line x1="1625.3" y1="124.3" x2="1698.1" y2="223.8" stroke="#1e1e1e" stroke-width="1.8"/>
<line x1="1625.1" y1="130.3" x2="1698.0" y2="228.3" stroke="#1e1e1e" stroke-width="1.0"/>
<line x1="1624.9" y1="136.1" x2="1697.9" y2="232.6" stroke="#1e1e1e" stroke-width="1.6"/>
<line x1="1624.7" y1="144.4" x2="1697.7" y2="238.9" stroke="#1e1e1e" stroke-width="1.0"/>
<line x1="1624.5" y1="152.7" x2="1697.5" y2="245.1" stroke="#1e1e1e" stroke-width="1.0"/>
<line x1="1624.3" y1="158.8" x2="1697.4" y2="249.7" stroke="#1e1e1e" stroke-width="1.8"/>
<line x1="1624.2" y1="163.4" x2="1697.2" y2="253.2" stroke="#1e1e1e" stroke-width="1.0"/>
<line x1="1624.1" y1="168.3" x2="1697.1" y2="256.8" stroke="#1e1e1e" stroke-width="1.4"/>
<line x1="1623.9" y1="172.3" x2="1697.0" y2="259.8" stroke="#1e1e1e" stroke-width="0.9"/>
<line x1="1623.8" y1="176.2" x2="1697.0" y2="262.8" stroke="#1e1e1e" stroke-width="0.9"/>
<line x1="1623.7" y1="181.1" x2="1696.8" y2="266.5" stroke="#1e1e1e" stroke-width="1.2"/>
<line x1="1623.6" y1="183.9" x2="1696.8" y2="268.6" stroke="#1e1e1e" stroke-width="0.9"/>
<polygon points="1622.4,226.6 1669.0,273.7 1645.3,1079.9 1596.1,1178.4" fill="#8f7d63"/>
<polygon points="1622.1,237.4 1662.4,276.5 1638.5,1093.5 1596.1,1178.4" fill="#bab5a8"/>
<polygon points="1621.9,247.3 1662.1,285.1 1638.5,1093.5 1596.1,1178.4" fill="#cfccc4"/>
<polygon points="1650.6,272.2 1662.2,283.2 1638.5,1093.5 1626.2,1118.1" fill="#c3bfb4"/>
<line x1="1622.4" y1="226.6" x2="1669.0" y2="273.7" stroke="#1c1c1c" stroke-width="1.2"/>
<line x1="1622.1" y1="237.4" x2="1662.4" y2="276.5" stroke="#444" stroke-width="0.9"/>
<line x1="1621.9" y1="247.3" x2="1650.5" y2="274.1" stroke="#6d7280" stroke-width="0.8"/>
<line x1="1662.4" y1="276.5" x2="1638.5" y2="1093.5" stroke="#444" stroke-width="0.9"/>
<line x1="1650.6" y1="272.2" x2="1626.2" y2="1118.1" stroke="#777" stroke-width="0.8"/>
<line x1="1625.1" y1="250.3" x2="1599.4" y2="1171.7" stroke="#7d8496" stroke-width="0.8"/>
<line x1="1669.0" y1="273.7" x2="1645.3" y2="1079.9" stroke="#1c1c1c" stroke-width="1.1"/>
<line x1="1683.8" y1="42.4" x2="1653.4" y2="1063.7" stroke="#1c1c1c" stroke-width="1.1"/>
</g>
<g stroke="#555" stroke-width="1" fill="none"><line x1="1370.5" y1="512" x2="1370.5" y2="532.5"/><line x1="1352" y1="532.5" x2="1378" y2="532.5"/></g>
<text x="1370" y="507" font-size="10" fill="#333" font-family="Liberation Sans">z</text>
<text x="1343" y="531" font-size="10" fill="#333" font-family="Liberation Sans">y</text>
<text x="1383" y="531" font-size="10" fill="#333" font-family="Liberation Sans">x</text>
<line x1="872" y1="170.5" x2="892" y2="170.5" stroke="#f08a1c" stroke-width="1" stroke-dasharray="3,2"/>
<line x1="862" y1="962.5" x2="882" y2="962.5" stroke="#f08a1c" stroke-width="1" stroke-dasharray="3,2"/>
</svg><div class="a" style="left:0px;top:140px;width:82px;height:851px;background:#f0f0f0;"></div><div class="a" style="left:81px;top:140px;width:1px;height:831px;background:#e3e3e3;"></div><div class="a" style="left:25px;top:145px;width:31px;height:1px;background:#777;"></div><div class="a" style="left:0px;top:150px;width:36px;height:27px;background:#cce4f7;border:1px solid #99c9ef"></div><svg style="left:7.5px;top:152.5px" width="21" height="21" viewBox="0 0 20 20"><path d="M5,2V15L8,12L10,17L12,16L10,11H14Z" fill="#8c9095" stroke="#333" stroke-width="1.1" stroke-linejoin="round"/></svg><svg style="left:43.5px;top:152.5px" width="21" height="21" viewBox="0 0 20 20"><rect x="1.5" y="3.5" width="17" height="13" fill="none" stroke="#333" stroke-width="1.3" stroke-dasharray="2.5,1.5"/></svg><div class="a" style="left:0px;top:183px;width:81px;height:20px;background:#d9d9d9;border-radius:0 4px 4px 0"></div><div class="t" style="left:12.2px;top:187.34px;font-size:11.6px;color:#111;transform:scaleX(0.9648);transform-origin:0 0;">Конструиров</div><div class="a" style="left:0px;top:509px;width:81px;height:19px;background:#d9d9d9;border-radius:0 4px 4px 0"></div><div class="t" style="left:12.2px;top:513.34px;font-size:11.6px;color:#111;transform:scaleX(1.0214);transform-origin:0 0;">Проекция</div><div class="a" style="left:0px;top:625px;width:81px;height:19px;background:#d9d9d9;border-radius:0 4px 4px 0"></div><div class="t" style="left:12.2px;top:629.34px;font-size:11.6px;color:#111;transform:scaleX(1.0064);transform-origin:0 0;">Документир</div><svg style="left:7.5px;top:209.5px" width="21" height="21" viewBox="0 0 20 20"><path d="M1.5,2.5L19,0.5V12L1.5,18.5Z" fill="#fafafa" stroke="#333" stroke-width="1.3" stroke-linejoin="round" stroke-linecap="round"/></svg><svg style="left:43.5px;top:209.5px" width="21" height="21" viewBox="0 0 20 20"><path d="M1,9L7,6.5L6.5,4L13,2L19,7L8,12Z" fill="#fafafa" stroke="#333" stroke-width="1.3" stroke-linejoin="round" stroke-linecap="round"/></svg><svg style="left:7.5px;top:239.5px" width="21" height="21" viewBox="0 0 20 20"><path d="M6.5,3C6.5,1 12.5,1 12.5,3V17C12.5,19 6.5,19 6.5,17Z M6.5,3C6.5,4.5 12.5,4.5 12.5,3" fill="#fafafa" stroke="#333" stroke-width="1.2" stroke-linejoin="round" stroke-linecap="round"/></svg><svg style="left:43.5px;top:239.5px" width="21" height="21" viewBox="0 0 20 20"><path d="M2,3L18,10V15L2,8ZM2,3V6L18,13" fill="#fafafa" stroke="#333" stroke-width="1.2" stroke-linejoin="round" stroke-linecap="round"/></svg><svg style="left:7.5px;top:269.5px" width="21" height="21" viewBox="0 0 20 20"><path d="M4.5,3L12,1V16L4.5,19Z" fill="#fafafa" stroke="#333" stroke-width="1.3" stroke-linejoin="round" stroke-linecap="round"/><path d="M7,9.5L8.5,9" fill="none" stroke="#333" stroke-width="1" stroke-linejoin="round" stroke-linecap="round"/></svg><svg style="left:43.5px;top:269.5px" width="21" height="21" viewBox="0 0 20 20"><path d="M2,3L18,1V15L2,17ZM10,2V16M2,10L18,8" fill="none" stroke="#333" stroke-width="1.3" stroke-linejoin="round" stroke-linecap="round"/></svg><svg style="left:7.5px;top:299.5px" width="21" height="21" viewBox="0 0 20 20"><path d="M3,2H6V10H17M3,2V19M6,10L3,12M17,10V17M9,13V19M3,12H14L17,10" fill="none" stroke="#333" stroke-width="1.2" stroke-linejoin="round" stroke-linecap="round"/></svg><svg style="left:43.5px;top:299.5px" width="21" height="21" viewBox="0 0 20 20"><path d="M10,14C6,12 6,5 10,5C14,5 14,12 10,14ZM9,14H11V17H9ZM1,9H4M16,9H19M3,3L5,5M17,3L15,5M3,15L5,13M17,15L15,13M8,9L9.5,8L10.5,10L12,9" fill="none" stroke="#333" stroke-width="1.1" stroke-linejoin="round" stroke-linecap="round"/></svg><svg style="left:7.5px;top:329.5px" width="21" height="21" viewBox="0 0 20 20"><path d="M1,14L8,2H17L19,13H15L12,7L6,18Z" fill="#fafafa" stroke="#333" stroke-width="1.2" stroke-linejoin="round" stroke-linecap="round"/></svg><svg style="left:43.5px;top:329.5px" width="21" height="21" viewBox="0 0 20 20"><path d="M1,6C5,7 13,6 19,1L17,17L13,13L8,19Z" fill="#fafafa" stroke="#333" stroke-width="1.2" stroke-linejoin="round" stroke-linecap="round"/></svg><svg style="left:7.5px;top:359.5px" width="21" height="21" viewBox="0 0 20 20"><path d="M1,2H8L11,5H3M3,5L5,8H12M5,8L7,11H14M7,11L9,14H17L11,5" fill="none" stroke="#333" stroke-width="1.1" stroke-linejoin="round" stroke-linecap="round"/></svg><svg style="left:43.5px;top:359.5px" width="21" height="21" viewBox="0 0 20 20"><path d="M2,7L18,3M2,11L18,7M2,7V18M10,5V14M18,3V12" fill="none" stroke="#333" stroke-width="1.2" stroke-linejoin="round" stroke-linecap="round"/></svg><svg style="left:7.5px;top:389.5px" width="21" height="21" viewBox="0 0 20 20"><path d="M1.5,3L17,1V14L1.5,18ZM7,2.5V17M12,2V15.5M1.5,8L17,6M1.5,13L17,10.5" fill="none" stroke="#333" stroke-width="1.2" stroke-linejoin="round" stroke-linecap="round"/></svg><svg style="left:43.5px;top:389.5px" width="21" height="21" viewBox="0 0 20 20"><path d="M5,3L14,1L19,8L10,11ZM2,8C8,9 12,9 18,7M6,9L10,17L19,12" fill="none" stroke="#333" stroke-width="1.1" stroke-linejoin="round" stroke-linecap="round"/></svg><svg style="left:7.5px;top:419.5px" width="21" height="21" viewBox="0 0 20 20"><path d="M1,3L5,2H19V12L15,14H1ZM5,2V14M10,2V14M15,2V14M1,8H19" fill="none" stroke="#333" stroke-width="1.1" stroke-linejoin="round" stroke-linecap="round"/></svg><svg style="left:43.5px;top:419.5px" width="21" height="21" viewBox="0 0 20 20"><path d="M3,2L17,1V13L3,15ZM3,15L6,12H17M6,12V2" fill="none" stroke="#333" stroke-width="1.2" stroke-linejoin="round" stroke-linecap="round"/></svg><svg style="left:7.5px;top:449.5px" width="21" height="21" viewBox="0 0 20 20"><path d="M2,3L8,2V18L2,19ZM8,2L17,1V14L8,16" fill="none" stroke="#333" stroke-width="1.2" stroke-linejoin="round" stroke-linecap="round"/></svg><svg style="left:43.5px;top:449.5px" width="21" height="21" viewBox="0 0 20 20"><path d="M1,5C8,3 12,6 19,14L14,17C8,13 6,10 1,5ZM7,4L13,9L9,12M13,6L17,12" fill="none" stroke="#333" stroke-width="1.1" stroke-linejoin="round" stroke-linecap="round"/></svg><svg style="left:7.5px;top:479.5px" width="21" height="21" viewBox="0 0 20 20"><path d="M8,3C5,5 3,9 3,13L10,19C10,14 12,10 16,8L12,1Z" fill="#fafafa" stroke="#333" stroke-width="1.2" stroke-linejoin="round" stroke-linecap="round"/></svg><svg style="left:43.5px;top:479.5px" width="21" height="21" viewBox="0 0 20 20"><path d="M2,2H9V6H13V10H18V18H12V16H8V18H2Z M7,11H14M7,13H14" fill="none" stroke="#333" stroke-width="1.3" stroke-linejoin="round" stroke-linecap="round"/></svg><svg style="left:7.5px;top:534.5px" width="21" height="21" viewBox="0 0 20 20"><path d="M1,9H9V14M9,14H16" fill="none" stroke="#8c8c8c" stroke-width="1.2" stroke-linejoin="round" stroke-linecap="round"/><path d="M3,7L5,4L7,7Z M12,12L14,9L16,12Z" fill="#8c8c8c" stroke="#8c8c8c" stroke-width="1" stroke-linejoin="round" stroke-linecap="round"/></svg><svg style="left:43.5px;top:534.5px" width="21" height="21" viewBox="0 0 20 20"><path d="M1,14H19" fill="none" stroke="#8c8c8c" stroke-width="1.2" stroke-linejoin="round" stroke-linecap="round"/><path d="M7,11L10,6L13,11Z" fill="#8c8c8c" stroke="#8c8c8c" stroke-width="1" stroke-linejoin="round" stroke-linecap="round"/></svg><svg style="left:7.5px;top:564.5px" width="21" height="21" viewBox="0 0 20 20"><circle cx="10" cy="10" r="3" fill="none" stroke="#8c8c8c" stroke-width="1.2"/><path d="M8,4L10,1L12,4ZM8,16L10,19L12,16ZM4,8L1,10L4,12ZM16,8L19,10L16,12Z" fill="#8c8c8c" stroke="#8c8c8c" stroke-width="0.8" stroke-linejoin="round" stroke-linecap="round"/></svg><svg style="left:43.5px;top:564.5px" width="21" height="21" viewBox="0 0 20 20"><circle cx="10" cy="10" r="8" fill="none" stroke="#8c8c8c" stroke-width="1.2"/><path d="M6,2.5V17.5M6,10H18M10,6H16V14H10" fill="none" stroke="#8c8c8c" stroke-width="1.1" stroke-linejoin="round" stroke-linecap="round"/></svg><svg style="left:7.5px;top:594.5px" width="21" height="21" viewBox="0 0 20 20"><path d="M1,3H13L19,8V18H1ZM13,3V8H19M4,15L11,8L13,10L6,17H4ZM8,16H15" fill="none" stroke="#8c8c8c" stroke-width="1.2" stroke-linejoin="round" stroke-linecap="round"/></svg><svg style="left:43.5px;top:594.5px" width="21" height="21" viewBox="0 0 20 20"><path d="M2,2H14V11H2ZM14,5L18,2V11L14,8M8,11V19M8,13L1,19M8,13L15,19" fill="none" stroke="#8c8c8c" stroke-width="1.2" stroke-linejoin="round" stroke-linecap="round"/></svg><svg style="left:7.5px;top:651.5px" width="21" height="21" viewBox="0 0 20 20"><path d="M1,13H19M3,10V16M17,10V16" fill="none" stroke="#8c8c8c" stroke-width="1.3" stroke-linejoin="round" stroke-linecap="round"/><text x="5" y="8" font-size="7" font-weight="bold" fill="#8c8c8c" font-family="Liberation Sans">1.2</text></svg><svg style="left:43.5px;top:651.5px" width="21" height="21" viewBox="0 0 20 20"><circle cx="8" cy="11" r="6" fill="none" stroke="#8c8c8c" stroke-width="1.2"/><path d="M8,3V19M0,11H16" fill="none" stroke="#8c8c8c" stroke-width="1.2" stroke-linejoin="round" stroke-linecap="round"/><text x="12" y="6" font-size="7" font-weight="bold" fill="#8c8c8c" font-family="Liberation Sans">1.2</text></svg><svg style="left:7.5px;top:681.5px" width="21" height="21" viewBox="0 0 20 20"><path d="M1,8C5,9 8,13 9,18M8,12L14,7H19" fill="none" stroke="#8c8c8c" stroke-width="1.2" stroke-linejoin="round" stroke-linecap="round"/><path d="M6,12L9,14L8,10Z" fill="#8c8c8c" stroke="#8c8c8c" stroke-width="1" stroke-linejoin="round" stroke-linecap="round"/><text x="11" y="6" font-size="7" font-weight="bold" fill="#8c8c8c" font-family="Liberation Sans">1.2</text></svg><svg style="left:43.5px;top:681.5px" width="21" height="21" viewBox="0 0 20 20"><path d="M1,16H17M1,16L13,6M11,9C13,10 14,12 14,14" fill="none" stroke="#8c8c8c" stroke-width="1.2" stroke-linejoin="round" stroke-linecap="round"/><path d="M12,13L14,16L16,13Z" fill="#8c8c8c" stroke="#8c8c8c" stroke-width="0.8" stroke-linejoin="round" stroke-linecap="round"/><text x="14" y="8" font-size="9" fill="#8c8c8c" font-family="Liberation Sans">α</text></svg><svg style="left:7.5px;top:711.5px" width="21" height="21" viewBox="0 0 20 20"><path d="M3,19L10,1L17,19M5.5,13H14.5" fill="none" stroke="#8c8c8c" stroke-width="1.2" stroke-linejoin="round" stroke-linecap="round"/></svg><svg style="left:43.5px;top:711.5px" width="21" height="21" viewBox="0 0 20 20"><path d="M2,17L8,11M8,11H10" fill="none" stroke="#8c8c8c" stroke-width="1.2" stroke-linejoin="round" stroke-linecap="round"/><path d="M2,12V17H7Z" fill="#8c8c8c" stroke="#8c8c8c" stroke-width="1" stroke-linejoin="round" stroke-linecap="round"/><text x="9" y="16" font-size="11" fill="#8c8c8c" font-family="Liberation Sans">A1</text></svg><svg style="left:7.5px;top:741.5px" width="21" height="21" viewBox="0 0 20 20"><circle cx="10" cy="6" r="4.5" fill="none" stroke="#222" stroke-width="1.5"/><text x="8" y="9" font-size="7" font-weight="bold" fill="#222" font-family="Liberation Sans">1</text><path d="M10,11V19" fill="none" stroke="#222" stroke-width="1.4" stroke-linejoin="round" stroke-dasharray="2,1.5"/></svg><svg style="left:43.5px;top:741.5px" width="21" height="21" viewBox="0 0 20 20"><path d="M6,5C6,1 12,1 13,4C17,3 19,8 17,10C19,13 16,17 13,16C12,19 6,19 5,16C1,17 0,11 3,10C0,8 2,4 6,5Z M6,7H16V11H10V17H6Z" fill="none" stroke="#8c8c8c" stroke-width="1.2" stroke-linejoin="round" stroke-linecap="round"/><path d="M7,10L9,8M8,13L12,9M7,16L13,10" fill="none" stroke="#8c8c8c" stroke-width="1" stroke-linejoin="round" stroke-linecap="round"/></svg><svg style="left:7.5px;top:771.5px" width="21" height="21" viewBox="0 0 20 20"><path d="M2,18L18,2" fill="none" stroke="#8c8c8c" stroke-width="1.2" stroke-linejoin="round" stroke-linecap="round"/></svg><svg style="left:43.5px;top:771.5px" width="21" height="21" viewBox="0 0 20 20"><circle cx="10" cy="10" r="8" fill="none" stroke="#8c8c8c" stroke-width="1.2"/></svg><svg style="left:7.5px;top:801.5px" width="21" height="21" viewBox="0 0 20 20"><path d="M2,17V8C4,4 10,3 16,3L11,8M2,17H18" fill="none" stroke="#8c8c8c" stroke-width="1.2" stroke-linejoin="round" stroke-linecap="round"/></svg><svg style="left:43.5px;top:801.5px" width="21" height="21" viewBox="0 0 20 20"><path d="M1,14C3,5 7,3 9,9C11,15 13,13 14,11C15,9 17,10 19,13" fill="none" stroke="#8c8c8c" stroke-width="1.2" stroke-linejoin="round" stroke-linecap="round"/></svg><svg style="left:7.5px;top:831.5px" width="21" height="21" viewBox="0 0 20 20"><path d="M1,15L6,4H15L19,15Z" fill="none" stroke="#8c8c8c" stroke-width="1.2" stroke-linejoin="round" stroke-linecap="round"/><path d="M3,13L10,5M6,15L13,6M10,15L16,9" fill="none" stroke="#8c8c8c" stroke-width="1" stroke-linejoin="round" stroke-linecap="round"/></svg><svg style="left:43.5px;top:831.5px" width="21" height="21" viewBox="0 0 20 20"><path d="M10,1V19M1,10H19M3.5,3.5L16.5,16.5M16.5,3.5L3.5,16.5" fill="none" stroke="#8c8c8c" stroke-width="1.1" stroke-linejoin="round" stroke-linecap="round"/><circle cx="10" cy="10" r="2" fill="#f0f0f0" stroke="#8c8c8c" stroke-width="1"/></svg><svg style="left:7.5px;top:861.5px" width="21" height="21" viewBox="0 0 20 20"><path d="M2,2H17V19H2ZM2,16L9,9L17,16" fill="none" stroke="#8c8c8c" stroke-width="1.2" stroke-linejoin="round" stroke-linecap="round"/><circle cx="12" cy="6" r="2" fill="none" stroke="#8c8c8c" stroke-width="1.1"/></svg><svg style="left:43.5px;top:861.5px" width="21" height="21" viewBox="0 0 20 20"><path d="M1,3H13L19,8V18H1ZM13,3V8H19M5,6H8V9H13V14H5Z" fill="none" stroke="#8c8c8c" stroke-width="1.2" stroke-linejoin="round" stroke-linecap="round"/></svg><div class="a" style="left:83px;top:551px;width:15px;height:32px;background:#ebebeb;border-radius:0 3px 3px 0"></div><svg style="left:91px;top:554px" width="2" height="27" viewBox="0 0 2 27"><path d="M1,0V27" stroke="#f39233" stroke-width="1" stroke-dasharray="4,3"/></svg><div class="a" style="left:1681px;top:140px;width:239px;height:851px;background:#f0f0f0;"></div><div class="a" style="left:1681px;top:140px;width:1px;height:851px;background:#dcdcdc;"></div><div class="a" style="left:1766px;top:145px;width:70px;height:1px;background:#666;"></div><svg style="left:1690px;top:157px" width="19" height="16" viewBox="0 0 19 16"><path d="M1,14V7.5L6,2H10L16,7.5V14ZM6,2L10.5,7.5V14M10.5,7.5H16" fill="none" stroke="#222" stroke-width="1.3"/></svg><div class="a" style="left:1719px;top:155px;width:1px;height:18px;background:#999;"></div><div class="a" style="left:1726px;top:150px;width:30px;height:29px;background:#cce4f7;border:1px solid #99c9ef"></div><svg style="left:1732px;top:157px" width="19" height="16" viewBox="0 0 19 16"><rect x="0.7" y="0.7" width="17.6" height="14" rx="1" fill="none" stroke="#222" stroke-width="1.3"/><path d="M3,12.5V8L6.5,4H10L15,8V12.5ZM6.5,4L10,8V12.5M10,8H15" fill="none" stroke="#222" stroke-width="1.2"/></svg><svg style="left:1761px;top:155px" width="20" height="20" viewBox="0 0 20 20"><path d="M1.5,17V7C1.5,4 3,2 6,1.5V5.5M6,5.5H18.5V17.5H6M1.5,17L6,17.5V5.5M10.5,13.5H18.5M10.5,13.5V17.5" fill="none" stroke="#222" stroke-width="1.3"/></svg><svg style="left:1792px;top:155px" width="20" height="20" viewBox="0 0 20 20"><path d="M1.5,1.5H11.5V12.5H1.5ZM1.5,5H11.5M11.5,4.5H14.5V15.5H4.5V12.5M14.5,7.5H17.5V18.5H7.5V15.5" fill="none" stroke="#222" stroke-width="1.3"/></svg><div class="a" style="left:1884px;top:154px;width:34px;height:21px;background:#e1e1e1;border:1px solid #adadad"></div><svg style="left:1891px;top:159px" width="22" height="11" viewBox="0 0 22 11"><path d="M0,1H12M0,5.5H12M0,10H12" stroke="#222" stroke-width="1.2"/><path d="M16,1L20,5.5L16,10Z" fill="#222"/></svg><div class="a" style="left:1684px;top:185px;width:234px;height:23px;background:#fff;border:1px solid #7a7a7a"></div><svg style="left:1689px;top:189px" width="14" height="15" viewBox="0 0 14 15"><circle cx="6" cy="6" r="4.8" fill="none" stroke="#555" stroke-width="1.1"/><path d="M9.5,9.5L13,13.5" stroke="#555" stroke-width="1.2"/></svg><div class="t" style="left:1707px;top:192.17px;font-size:11.8px;color:#6a6a6a;transform:scaleX(0.9733);transform-origin:0 0;">Поиск по Карте Видов</div><div class="a" style="left:1682px;top:210px;width:222px;height:478px;background:#fff;"></div><div class="a" style="left:1682px;top:628px;width:221px;height:22px;background:#d9d9d9;"></div><div class="a" style="left:1682px;top:210px;width:221px;height:477px;overflow:hidden"><div class="a" style="left:-1682px;top:-210px;width:1920px;height:1050px"><svg style="left:1703px;top:211.5px" width="18" height="18" viewBox="0 0 18 18"><rect x="1" y="1" width="16" height="14" fill="none" stroke="#2f7fe6" stroke-width="1.2"/><path d="M3,12V8L6.5,4H10L14,8V12ZM6.5,4L10,8V12M10,8H14" fill="none" stroke="#2f7fe6" stroke-width="1.1"/></svg><div class="t" style="left:1726px;top:214.5px;font-size:11.6px;color:#111;">Шаблон АС28 3Д -12 Стены+Пере</div><svg style="left:1689px;top:217px" width="10" height="6" viewBox="0 0 10 6"><path d="M1,1L5,5L9,1" fill="none" stroke="#333" stroke-width="1.5"/></svg><svg style="left:1713px;top:233.5px" width="18" height="18" viewBox="0 0 18 18"><path d="M1,3H6L7.5,5H17V15H1Z M1,5H7.5" fill="#f4f4f4" stroke="#333" stroke-width="1.1"/></svg><div class="t" style="left:1736px;top:236.5px;font-size:11.6px;color:#111;">Стены</div><svg style="left:1701px;top:237px" width="6" height="10" viewBox="0 0 6 10"><path d="M1,1L5,5L1,9" fill="none" stroke="#888" stroke-width="1.4"/></svg><svg style="left:1713px;top:255.5px" width="18" height="18" viewBox="0 0 18 18"><path d="M1,3H6L7.5,5H17V15H1Z M1,5H7.5" fill="#f4f4f4" stroke="#333" stroke-width="1.1"/></svg><div class="t" style="left:1736px;top:258.5px;font-size:11.6px;color:#111;">Перекрытия</div><svg style="left:1699px;top:261px" width="10" height="6" viewBox="0 0 10 6"><path d="M1,1L5,5L9,1" fill="none" stroke="#333" stroke-width="1.5"/></svg><svg style="left:1723px;top:277.5px" width="18" height="18" viewBox="0 0 18 18"><path d="M1.5,1.5H7V6H16.5V14.5H1.5Z" fill="none" stroke="#2f7fe6" stroke-width="1.2"/><path d="M3.5,2.5L3,4.5" stroke="#2f7fe6" stroke-width="1"/></svg><div class="t" style="left:1746px;top:280.5px;font-size:11.6px;color:#111;">Перекрытия план</div><svg style="left:1723px;top:299.5px" width="18" height="18" viewBox="0 0 18 18"><path d="M1.5,6L9,2L16.5,6V14H1.5ZM1.5,6H16.5" fill="none" stroke="#2f7fe6" stroke-width="1.2"/></svg><div class="t" style="left:1746px;top:302.5px;font-size:11.6px;color:#111;">Для документации</div><svg style="left:1723px;top:321.5px" width="18" height="18" viewBox="0 0 18 18"><path d="M1.5,3L12.5,0.8V17L1.5,14.2ZM12.5,0.8L16,4V14L12.5,17" fill="none" stroke="#2f7fe6" stroke-width="1.2" stroke-linejoin="round"/></svg><div class="t" style="left:1746px;top:324.5px;font-size:11.6px;color:#111;">Перекрытия вид сверху 3д окна</div><svg style="left:1723px;top:343.5px" width="18" height="18" viewBox="0 0 18 18"><path d="M1.5,3L12.5,0.8V17L1.5,14.2ZM12.5,0.8L16,4V14L12.5,17" fill="none" stroke="#2f7fe6" stroke-width="1.2" stroke-linejoin="round"/></svg><div class="t" style="left:1746px;top:346.5px;font-size:11.6px;color:#111;">Перекрытия вид снизу 3д окна</div><svg style="left:1723px;top:365.5px" width="18" height="18" viewBox="0 0 18 18"><path d="M1.5,1.5H12L16.5,5.5V15.5H1.5Z" fill="none" stroke="#2f7fe6" stroke-width="1.2" stroke-linejoin="round"/><path d="M4.5,5L9,4V13L4.5,12ZM9,4L11.5,5.5V11.5L9,13" fill="none" stroke="#2f7fe6" stroke-width="1.1"/></svg><div class="t" style="left:1746px;top:368.5px;font-size:11.6px;color:#111;">Перекрытие вид сверху 3д документ</div><svg style="left:1723px;top:387.5px" width="18" height="18" viewBox="0 0 18 18"><path d="M1.5,1.5H12L16.5,5.5V15.5H1.5Z" fill="none" stroke="#2f7fe6" stroke-width="1.2" stroke-linejoin="round"/><path d="M4.5,5L9,4V13L4.5,12ZM9,4L11.5,5.5V11.5L9,13" fill="none" stroke="#2f7fe6" stroke-width="1.1"/></svg><div class="t" style="left:1746px;top:390.5px;font-size:11.6px;color:#111;">Перекрытие вид снизу 3д документ</div><svg style="left:1713px;top:409.5px" width="18" height="18" viewBox="0 0 18 18"><path d="M1,3H6L7.5,5H17V15H1Z M1,5H7.5" fill="#f4f4f4" stroke="#333" stroke-width="1.1"/></svg><div class="t" style="left:1736px;top:412.5px;font-size:11.6px;color:#111;">Кровля</div><svg style="left:1699px;top:415px" width="10" height="6" viewBox="0 0 10 6"><path d="M1,1L5,5L9,1" fill="none" stroke="#333" stroke-width="1.5"/></svg><svg style="left:1723px;top:431.5px" width="18" height="18" viewBox="0 0 18 18"><path d="M1.5,1.5H7V6H16.5V14.5H1.5Z" fill="none" stroke="#2f7fe6" stroke-width="1.2"/><path d="M3.5,2.5L3,4.5" stroke="#2f7fe6" stroke-width="1"/></svg><div class="t" style="left:1746px;top:434.5px;font-size:11.6px;color:#111;">Кровля план</div><svg style="left:1723px;top:453.5px" width="18" height="18" viewBox="0 0 18 18"><path d="M1.5,6L9,2L16.5,6V14H1.5ZM1.5,6H16.5" fill="none" stroke="#2f7fe6" stroke-width="1.2"/></svg><div class="t" style="left:1746px;top:456.5px;font-size:11.6px;color:#111;">Кровля для документации</div><svg style="left:1723px;top:475.5px" width="18" height="18" viewBox="0 0 18 18"><path d="M1.5,1.5H7V6H16.5V14.5H1.5Z" fill="none" stroke="#2f7fe6" stroke-width="1.2"/><path d="M3.5,2.5L3,4.5" stroke="#2f7fe6" stroke-width="1"/></svg><div class="t" style="left:1746px;top:478.5px;font-size:11.6px;color:#111;">Кровля план для документации</div><svg style="left:1723px;top:497.5px" width="18" height="18" viewBox="0 0 18 18"><path d="M1.5,3L12.5,0.8V17L1.5,14.2ZM12.5,0.8L16,4V14L12.5,17" fill="none" stroke="#2f7fe6" stroke-width="1.2" stroke-linejoin="round"/></svg><div class="t" style="left:1746px;top:500.5px;font-size:11.6px;color:#111;">Кровля вид из помещения 3д окна</div><svg style="left:1723px;top:519.5px" width="18" height="18" viewBox="0 0 18 18"><path d="M1.5,3L12.5,0.8V17L1.5,14.2ZM12.5,0.8L16,4V14L12.5,17" fill="none" stroke="#2f7fe6" stroke-width="1.2" stroke-linejoin="round"/></svg><div class="t" style="left:1746px;top:522.5px;font-size:11.6px;color:#111;">Кровля вид с улицы</div><svg style="left:1723px;top:541.5px" width="18" height="18" viewBox="0 0 18 18"><path d="M1.5,1.5H12L16.5,5.5V15.5H1.5Z" fill="none" stroke="#2f7fe6" stroke-width="1.2" stroke-linejoin="round"/><path d="M4.5,5L9,4V13L4.5,12ZM9,4L11.5,5.5V11.5L9,13" fill="none" stroke="#2f7fe6" stroke-width="1.1"/></svg><div class="t" style="left:1746px;top:544.5px;font-size:11.6px;color:#111;">Кровля вид из помещения 3д документ</div><svg style="left:1723px;top:563.5px" width="18" height="18" viewBox="0 0 18 18"><path d="M1.5,1.5H12L16.5,5.5V15.5H1.5Z" fill="none" stroke="#2f7fe6" stroke-width="1.2" stroke-linejoin="round"/><path d="M4.5,5L9,4V13L4.5,12ZM9,4L11.5,5.5V11.5L9,13" fill="none" stroke="#2f7fe6" stroke-width="1.1"/></svg><div class="t" style="left:1746px;top:566.5px;font-size:11.6px;color:#111;">Кровля вид с улицы 3д документ</div><svg style="left:1713px;top:585.5px" width="18" height="18" viewBox="0 0 18 18"><path d="M1.5,1.5H7V6H16.5V14.5H1.5Z" fill="none" stroke="#2f7fe6" stroke-width="1.2"/><path d="M3.5,2.5L3,4.5" stroke="#2f7fe6" stroke-width="1"/></svg><div class="t" style="left:1736px;top:588.5px;font-size:11.6px;color:#111;">Примеры пирогов</div><svg style="left:1713px;top:607.5px" width="18" height="18" viewBox="0 0 18 18"><path d="M1.5,3L12.5,0.8V17L1.5,14.2ZM12.5,0.8L16,4V14L12.5,17" fill="none" stroke="#2f7fe6" stroke-width="1.2" stroke-linejoin="round"/></svg><div class="t" style="left:1736px;top:610.5px;font-size:11.6px;color:#111;">Все пироги</div><svg style="left:1713px;top:629.5px" width="18" height="18" viewBox="0 0 18 18"><path d="M1.5,3L12.5,0.8V17L1.5,14.2ZM12.5,0.8L16,4V14L12.5,17" fill="none" stroke="#2f7fe6" stroke-width="1.2" stroke-linejoin="round"/></svg><div class="t" style="left:1736px;top:632.5px;font-size:11.6px;color:#111;font-weight:bold;">Стена с панелями</div><svg style="left:1713px;top:651.5px" width="18" height="18" viewBox="0 0 18 18"><path d="M1.5,1.5H7V6H16.5V14.5H1.5Z" fill="none" stroke="#2f7fe6" stroke-width="1.2"/><path d="M3.5,2.5L3,4.5" stroke="#2f7fe6" stroke-width="1"/></svg><div class="t" style="left:1736px;top:654.5px;font-size:11.6px;color:#111;">Все пироги</div><svg style="left:1713px;top:673.5px" width="18" height="18" viewBox="0 0 18 18"><path d="M1.5,3L12.5,0.8V17L1.5,14.2ZM12.5,0.8L16,4V14L12.5,17" fill="none" stroke="#2f7fe6" stroke-width="1.2" stroke-linejoin="round"/></svg><div class="t" style="left:1736px;top:676.5px;font-size:11.6px;color:#111;">Примеры пирогов 3Д</div></div></div><div class="a" style="left:1904px;top:210px;width:15px;height:478px;background:#f0f0f0;"></div><div class="a" style="left:1904px;top:227px;width:15px;height:118px;background:#a6a6a6;"></div><svg style="left:1907px;top:216px" width="10" height="6" viewBox="0 0 10 6"><path d="M1,5L5,1L9,5" fill="none" stroke="#555" stroke-width="1.5"/></svg><svg style="left:1907px;top:676px" width="10" height="6" viewBox="0 0 10 6"><path d="M1,1L5,5L9,1" fill="none" stroke="#555" stroke-width="1.5"/></svg><div class="a" style="left:1682px;top:688px;width:222px;height:15px;background:#f0f0f0;"></div><div class="a" style="left:1699px;top:688px;width:124px;height:15px;background:#cdcdcd;"></div><svg style="left:1687px;top:691px" width="6" height="9" viewBox="0 0 6 9"><path d="M5,1L1,4.5L5,8" fill="none" stroke="#555" stroke-width="1.5"/></svg><svg style="left:1892px;top:691px" width="6" height="9" viewBox="0 0 6 9"><path d="M1,1L5,4.5L1,8" fill="none" stroke="#555" stroke-width="1.5"/></svg><svg style="left:1688px;top:709px" width="24" height="20" viewBox="0 0 24 20"><path d="M1,9H11V18H1ZM3,17V13L6,10L9,13V17" fill="none" stroke="#222" stroke-width="1.2"/><circle cx="16" cy="6" r="4.5" fill="#f0f0f0" stroke="#2f7fe6" stroke-width="1.1"/><path d="M13.5,6H18.5M16,3.5V8.5" stroke="#2f7fe6" stroke-width="1.1"/></svg><svg style="left:1717px;top:709px" width="24" height="20" viewBox="0 0 24 20"><path d="M4,9H14V18H4ZM6,17V13L9,10L12,13V17" fill="none" stroke="#222" stroke-width="1.2"/><path d="M1,19L4,15" stroke="#222" stroke-width="2"/><circle cx="19" cy="6" r="4.5" fill="#f0f0f0" stroke="#2f7fe6" stroke-width="1.1"/><path d="M16.5,6H21.5M19,3.5V8.5" stroke="#2f7fe6" stroke-width="1.1"/></svg><svg style="left:1748px;top:709px" width="24" height="20" viewBox="0 0 24 20"><path d="M1,9H4L5,8V18H14V10H5" fill="none" stroke="#222" stroke-width="1.2"/><circle cx="15" cy="6" r="4.5" fill="#f0f0f0" stroke="#2f7fe6" stroke-width="1.1"/><path d="M12.5,6H17.5M15,3.5V8.5" stroke="#2f7fe6" stroke-width="1.1"/></svg><svg style="left:1781px;top:712px" width="16" height="14" viewBox="0 0 16 14"><rect x="1" y="2" width="13" height="10" fill="none" stroke="#2f7fe6" stroke-width="1.3"/><path d="M4,5H5M4,7.5H5M4,10H5M6.5,5H11M6.5,7.5H11M6.5,10H11" stroke="#2f7fe6" stroke-width="1.1"/></svg><svg style="left:1811px;top:713px" width="14" height="14" viewBox="0 0 14 14"><path d="M1,1L13,13M13,1L1,13" stroke="#e8421e" stroke-width="2"/></svg><div class="a" style="left:1684px;top:738px;width:234px;height:22px;background:#dadada;border-radius:4px"></div><svg style="left:1690px;top:746px" width="9" height="6" viewBox="0 0 9 6"><path d="M0,0H9L4.5,5Z" fill="#222"/></svg><div class="t" style="left:1708px;top:744.17px;font-size:11.8px;color:#111;transform:scaleX(0.9262);transform-origin:0 0;">Свойства</div><svg style="left:1687px;top:765px" width="13" height="13" viewBox="0 0 13 13"><path d="M1.5,2L8,1V12L1.5,11ZM8,1L11,3V10L8,12" fill="none" stroke="#2f7fe6" stroke-width="1.2"/></svg><div class="a" style="left:1704px;top:762px;width:44px;height:19px;background:#fff;border:1px solid #7a7a7a"></div><div class="a" style="left:1751px;top:762px;width:167px;height:19px;background:#fff;border:1px solid #7a7a7a"></div><div class="t" style="left:1755.5px;top:766.67px;font-size:11.8px;color:#111;transform:scaleX(0.9466);transform-origin:0 0;">Стена с панелями</div><svg style="left:1686px;top:785px" width="16" height="15" viewBox="0 0 16 15"><path d="M1.5,5L6,2H15L10.5,5ZM1.5,5V7H10.5L15,4M1.5,8.5L6,5.5M10.5,8.5H1.5V10.5H10.5L15,7.5V5.5M1.5,12L6,9M10.5,12H1.5V14H10.5L15,11V9" fill="none" stroke="#222" stroke-width="1.1" stroke-linejoin="round"/></svg><div class="t" style="left:1704px;top:787.67px;font-size:11.8px;color:#111;transform:scaleX(0.9657);transform-origin:0 0;">Специальный</div><svg style="left:1686px;top:808px" width="16" height="10" viewBox="0 0 16 10"><path d="M1,1H15V8H1ZM4,1V4M7,1V4M10,1V4M13,1V4" fill="none" stroke="#222" stroke-width="1.1"/></svg><div class="t" style="left:1704px;top:808.67px;font-size:11.8px;color:#111;transform:scaleX(0.9075);transform-origin:0 0;">1:100</div><svg style="left:1686px;top:827px" width="16" height="14" viewBox="0 0 16 14"><path d="M1,4H4L5.5,2H10.5L12,4H15V13H1Z" fill="none" stroke="#222" stroke-width="1.1"/><circle cx="8" cy="8.5" r="3" fill="none" stroke="#222" stroke-width="1.1"/></svg><div class="t" style="left:1704px;top:829.67px;font-size:11.8px;color:#111;transform:scaleX(1.0110);transform-origin:0 0;">3D-окно</div><div class="a" style="left:1685px;top:847px;width:232px;height:22px;background:#e1e1e1;border:1px solid #adadad"></div><div class="t" style="left:1766.5px;top:852.67px;font-size:11.8px;color:#111;transform:scaleX(0.9486);transform-origin:0 0;">Параметры...</div><div class="a" style="left:1767px;top:876px;width:69px;height:1px;background:#888;"></div><div class="t" style="left:1684.4px;top:886.17px;font-size:11.8px;color:#111;transform:scaleX(0.9712);transform-origin:0 0;">Элементы по Умолчанию:</div><div class="a" style="left:1684px;top:902px;width:30px;height:30px;background:#cce4f7;border:1px solid #99c9ef"></div><svg style="left:1689px;top:907px" width="20" height="20" viewBox="0 0 20 20"><path d="M3,3H17V17H3ZM3,7.5H17M3,12.5H17M8,3V7.5M13,7.5V12.5M8,12.5V17" fill="none" stroke="#222" stroke-width="1.3"/><path d="M1,3H3M1,17H3" stroke="#222"/></svg><svg style="left:1718px;top:907px" width="20" height="20" viewBox="0 0 20 20"><path d="M4,5H10L12,9H15V13H3V9H4ZM3,13V16H17V13M5,16V18M9,16V18M13,16V18M7,5V9" fill="none" stroke="#222" stroke-width="1.2"/></svg><svg style="left:1748px;top:907px" width="20" height="20" viewBox="0 0 20 20"><path d="M3,2H16M6,2V18M3,18H9M6,6H14V10M12,13H18V17H12Z" fill="none" stroke="#222" stroke-width="1.2"/></svg><div class="a" style="left:1890px;top:902px;width:28px;height:30px;background:#dcdcdc;border:1px solid #bdbdbd"></div><svg style="left:1893px;top:905px" width="22" height="22" viewBox="0 0 22 22"><path d="M2,5H6L7,3H12V15H2Z M4,7H9V17H15V7H12 M7,9V19H19V9H15" fill="none" stroke="#222" stroke-width="1.2"/></svg><div class="a" style="left:1684px;top:936px;width:234px;height:1px;background:#bbb;"></div><div class="t" style="left:1684.4px;top:948.67px;font-size:11.8px;color:#111;transform:scaleX(0.9722);transform-origin:0 0;">Фильтр Реконструкции:</div><div class="a" style="left:1684px;top:964px;width:234px;height:22px;background:#fff;border:1px solid #7a7a7a"></div><div class="t" style="left:1690px;top:969.67px;font-size:11.8px;color:#111;transform:scaleX(0.9295);transform-origin:0 0;">00 Показать Все Элементы</div><svg style="left:1902px;top:971px" width="11" height="7" viewBox="0 0 11 7"><path d="M1,1L5.5,5.5L10,1" fill="none" stroke="#333" stroke-width="1.2"/></svg><div class="a" style="left:82px;top:971px;width:1599px;height:19px;background:#f0f0f0;"></div><svg style="left:85px;top:973px" width="18" height="16" viewBox="0 0 18 16"><path d="M3,8C3,3 10,2 12,5C14,8 12,12 8,12L5,14M5,14L2,15L3,12M1,5H6V1" fill="none" stroke="#a5a5a5" stroke-width="1.2" stroke-linejoin="round" stroke-linecap="round"/></svg><svg style="left:107px;top:973px" width="18" height="16" viewBox="0 0 18 16"><path d="M14,8C14,3 7,2 5,5C3,8 5,12 9,12L12,14M15,15L12,14L13,11M11,5H16V1" fill="none" stroke="#a5a5a5" stroke-width="1.2" stroke-linejoin="round" stroke-linecap="round"/></svg><svg style="left:131px;top:972px" width="18" height="18" viewBox="0 0 18 18"><circle cx="7" cy="7" r="5.5" fill="none" stroke="#222" stroke-width="1.3"/><path d="M11,11L16,16M4.5,7H9.5M7,4.5V9.5" fill="none" stroke="#222" stroke-width="1.3" stroke-linejoin="round" stroke-linecap="round"/></svg><div class="a" style="left:153px;top:974px;width:1px;height:14px;background:#999;"></div><svg style="left:160px;top:973px" width="16" height="16" viewBox="0 0 16 16"><path d="M3,9C0,6 4,3 8,3C12,3 15,5 14,8C13,10 9,11 7,10M7,10L9,13M7,10L10,8" fill="none" stroke="#222" stroke-width="1.2" stroke-linejoin="round" stroke-linecap="round"/></svg><svg style="left:185px;top:973px" width="12" height="16" viewBox="0 0 12 16"><circle cx="6" cy="2.5" r="1.6" fill="#222"/><path d="M6,5L5,10L3,14M5,10L8,14M2,8L6,5L9,8" fill="none" stroke="#222" stroke-width="1.3" stroke-linejoin="round" stroke-linecap="round"/></svg><div class="a" style="left:204px;top:974px;width:1px;height:14px;background:#999;"></div><svg style="left:210px;top:972px" width="18" height="18" viewBox="0 0 18 18"><circle cx="7" cy="7" r="6" fill="none" stroke="#222" stroke-width="1.3"/><path d="M12,12L16,16M7,2.5V4M7,10V11.5M2.5,7H4M10,7H11.5" fill="none" stroke="#222" stroke-width="1.5" stroke-linejoin="round" stroke-linecap="round"/></svg><div class="t" style="left:270.4px;top:976.43px;font-size:11.5px;color:#999;transform:scaleX(1.0155);transform-origin:0 0;">Н/Д</div><svg style="left:328px;top:977px" width="6" height="9" viewBox="0 0 6 9"><path d="M0.5,0.5L5.5,4.5L0.5,8.5Z" fill="#a0a0a0"/></svg><div class="a" style="left:339px;top:974px;width:1px;height:14px;background:#999;"></div><svg style="left:346px;top:973px" width="16" height="16" viewBox="0 0 16 16"><path d="M2,7L6,3L10,6L6,10ZM10,12L13,9L15,12M13,9V15" fill="none" stroke="#a5a5a5" stroke-width="1.1" stroke-linejoin="round" stroke-linecap="round"/></svg><div class="t" style="left:405.4px;top:976.43px;font-size:11.5px;color:#999;transform:scaleX(1.0155);transform-origin:0 0;">Н/Д</div><svg style="left:464px;top:977px" width="6" height="9" viewBox="0 0 6 9"><path d="M0.5,0.5L5.5,4.5L0.5,8.5Z" fill="#a0a0a0"/></svg><div class="a" style="left:474px;top:974px;width:1px;height:14px;background:#999;"></div><svg style="left:481px;top:973px" width="16" height="16" viewBox="0 0 16 16"><path d="M1,3H15V10H1ZM4,3V6M7,3V6M10,3V6M13,3V6" fill="none" stroke="#222" stroke-width="1.3" stroke-linejoin="round" stroke-linecap="round"/></svg><div class="t" style="left:538px;top:976.17px;font-size:11.8px;color:#111;transform:scaleX(0.8906);transform-origin:0 0;">1:100</div><svg style="left:598px;top:977px" width="6" height="9" viewBox="0 0 6 9"><path d="M0.5,0.5L5.5,4.5L0.5,8.5Z" fill="#222"/></svg><svg style="left:614px;top:973px" width="16" height="16" viewBox="0 0 16 16"><path d="M1.5,5.5L6,2.5H15L10.5,5.5ZM1.5,5.5V7.5H10.5L15,4.5M1.5,9L6,6M10.5,9H1.5V11H10.5L15,8V6M1.5,12.5L6,9.5M10.5,12.5H1.5V14.5H10.5L15,11.5V9.5" fill="none" stroke="#222" stroke-width="1.1" stroke-linejoin="round" stroke-linecap="round"/></svg><div class="t" style="left:648.3px;top:976.17px;font-size:11.8px;color:#111;transform:scaleX(0.9657);transform-origin:0 0;">Специальный</div><svg style="left:734px;top:977px" width="6" height="9" viewBox="0 0 6 9"><path d="M0.5,0.5L5.5,4.5L0.5,8.5Z" fill="#222"/></svg><svg style="left:751px;top:973px" width="16" height="16" viewBox="0 0 16 16"><path d="M1,2H15V14H1ZM1,5H15M4,2L3,5M8,2L7,5M12,2L11,5M3,8H13M3,11H13" fill="none" stroke="#222" stroke-width="1.1" stroke-linejoin="round" stroke-linecap="round"/></svg><div class="t" style="left:790px;top:976.17px;font-size:11.8px;color:#111;transform:scaleX(0.9224);transform-origin:0 0;">Вся Модель</div><svg style="left:868px;top:977px" width="6" height="9" viewBox="0 0 6 9"><path d="M0.5,0.5L5.5,4.5L0.5,8.5Z" fill="#222"/></svg><svg style="left:887px;top:973px" width="16" height="16" viewBox="0 0 16 16"><path d="M5,1V10L7,13L9,10V1" fill="none" stroke="#222" stroke-width="1.2" stroke-linejoin="round" stroke-linecap="round"/></svg><div class="t" style="left:910px;top:976.17px;font-size:11.8px;color:#111;transform:scaleX(0.9514);transform-origin:0 0;">03 Архитектура...</div><svg style="left:1003px;top:977px" width="6" height="9" viewBox="0 0 6 9"><path d="M0.5,0.5L5.5,4.5L0.5,8.5Z" fill="#222"/></svg><svg style="left:1020px;top:973px" width="16" height="16" viewBox="0 0 16 16"><path d="M1,3H15V13H1ZM4,6H12V10H4Z" fill="none" stroke="#222" stroke-width="1.2" stroke-linejoin="round" stroke-linecap="round"/></svg><div class="t" style="left:1044px;top:976.17px;font-size:11.8px;color:#111;transform:scaleX(0.9540);transform-origin:0 0;">03 Строительн...</div><svg style="left:1138px;top:977px" width="6" height="9" viewBox="0 0 6 9"><path d="M0.5,0.5L5.5,4.5L0.5,8.5Z" fill="#222"/></svg><svg style="left:1154px;top:973px" width="16" height="16" viewBox="0 0 16 16"><path d="M3,5V15H11V5ZM6,2H14V12M1,1V3H3" fill="none" stroke="#222" stroke-width="1.1" stroke-linejoin="round" stroke-linecap="round"/><rect x="6" y="10" width="6" height="4" fill="#333"/></svg><div class="t" style="left:1177.3px;top:976.17px;font-size:11.8px;color:#111;transform:scaleX(0.9935);transform-origin:0 0;">Упрощенный ...</div><svg style="left:1271px;top:977px" width="6" height="9" viewBox="0 0 6 9"><path d="M0.5,0.5L5.5,4.5L0.5,8.5Z" fill="#222"/></svg><svg style="left:1287px;top:973px" width="16" height="16" viewBox="0 0 16 16"><path d="M1,14L1,7L6,2L10,6V14ZM6,2V14M10,9H15V14H10" fill="none" stroke="#222" stroke-width="1.1" stroke-linejoin="round" stroke-linecap="round"/></svg><div class="t" style="left:1311.7px;top:976.17px;font-size:11.8px;color:#111;transform:scaleX(0.9276);transform-origin:0 0;">00 Показать Вс...</div><svg style="left:1405px;top:977px" width="6" height="9" viewBox="0 0 6 9"><path d="M0.5,0.5L5.5,4.5L0.5,8.5Z" fill="#222"/></svg><svg style="left:1422px;top:973px" width="16" height="16" viewBox="0 0 16 16"><path d="M1,6C5,2 11,2 15,5M1,9C5,5 11,5 15,8M3,11H15V15H3ZM6,12V14M9,12V14M12,12V14" fill="none" stroke="#222" stroke-width="1.1" stroke-linejoin="round" stroke-linecap="round"/></svg><div class="t" style="left:1445.7px;top:976.17px;font-size:11.8px;color:#111;transform:scaleX(0.9844);transform-origin:0 0;">Только Основ...</div><svg style="left:1539px;top:977px" width="6" height="9" viewBox="0 0 6 9"><path d="M0.5,0.5L5.5,4.5L0.5,8.5Z" fill="#222"/></svg><svg style="left:1557px;top:973px" width="16" height="16" viewBox="0 0 16 16"><path d="M2,5L7,2H14V10L9,14H2ZM2,5H9V14M9,5L14,2" fill="none" stroke="#222" stroke-width="1.2" stroke-linejoin="round" stroke-linecap="round"/></svg><div class="t" style="left:1579.3px;top:976.17px;font-size:11.8px;color:#111;transform:scaleX(0.9681);transform-origin:0 0;">Упрощенная О...</div><svg style="left:1673px;top:977px" width="6" height="9" viewBox="0 0 6 9"><path d="M0.5,0.5L5.5,4.5L0.5,8.5Z" fill="#222"/></svg><div class="a" style="left:608px;top:972px;width:1px;height:17px;background:#c8c8c8;"></div><div class="a" style="left:744px;top:972px;width:1px;height:17px;background:#c8c8c8;"></div><div class="a" style="left:879px;top:972px;width:1px;height:17px;background:#c8c8c8;"></div><div class="a" style="left:1014px;top:972px;width:1px;height:17px;background:#c8c8c8;"></div><div class="a" style="left:1148px;top:972px;width:1px;height:17px;background:#c8c8c8;"></div><div class="a" style="left:1281px;top:972px;width:1px;height:17px;background:#c8c8c8;"></div><div class="a" style="left:1415px;top:972px;width:1px;height:17px;background:#c8c8c8;"></div><div class="a" style="left:1549px;top:972px;width:1px;height:17px;background:#c8c8c8;"></div><div class="a" style="left:1677px;top:972px;width:4px;height:17px;background:#e0e0e0;"></div><div class="a" style="left:0px;top:990px;width:1920px;height:1px;background:#d8d8d8;"></div><div class="a" style="left:4px;top:1001px;width:1px;height:15px;background:#888;"></div><div class="a" style="left:7px;top:993px;width:80px;height:30px;background:#cce4f7;border:1px solid #99c9ef"></div><svg style="left:11px;top:999px" width="18" height="18" viewBox="0 0 18 18"><path d="M1,1H17V17H1ZM1,3.5H17" fill="none" stroke="#222" stroke-width="1.3" stroke-linejoin="round" stroke-linecap="round"/><path d="M3,8L6,6H13V13L10,15H3ZM3,8H10V15M10,8L13,6" fill="none" stroke="#222" stroke-width="1.2" stroke-linejoin="round" stroke-linecap="round"/></svg><div class="t" style="left:33px;top:1003.50px;font-size:12px;color:#111;transform:scaleX(1.0098);transform-origin:0 0;">3D-окно</div><div class="a" style="left:88px;top:996px;width:1px;height:24px;background:#888;"></div><div class="a" style="left:94px;top:993px;width:30px;height:30px;background:#cce4f7;border:1px solid #99c9ef"></div><svg style="left:99px;top:999px" width="18" height="18" viewBox="0 0 18 18"><path d="M2,2L12,4V14L2,16ZM12,4L15,2V16L12,14" fill="none" stroke="#222" stroke-width="1.3" stroke-linejoin="round" stroke-linecap="round"/></svg><svg style="left:127px;top:999px" width="18" height="18" viewBox="0 0 18 18"><path d="M2,5L6,2H16V12L12,16H2ZM2,5H12V16M12,5L16,2" fill="none" stroke="#222" stroke-width="1.3" stroke-linejoin="round" stroke-linecap="round"/></svg><svg style="left:160px;top:998px" width="18" height="20" viewBox="0 0 18 20"><path d="M9,1V8M7,3L9,1L11,3M9,8L3,13M9,8L16,13M1,12L3,13L2,15M14,14L16,13L15,11M6,10L9,7L12,10L9,14Z" fill="none" stroke="#222" stroke-width="1.2" stroke-linejoin="round" stroke-linecap="round"/></svg><svg style="left:190px;top:1005px" width="8" height="5" viewBox="0 0 8 5"><path d="M0,0H8L4,4.5Z" fill="#222"/></svg><div class="a" style="left:204px;top:996px;width:1px;height:24px;background:#888;"></div><svg style="left:215px;top:999px" width="16" height="18" viewBox="0 0 16 18"><circle cx="8" cy="2.5" r="2" fill="none" stroke="#222" stroke-width="1.2"/><path d="M8,5L7,11L4,17M7,11L11,17M4,9L8,5L12,9" fill="none" stroke="#222" stroke-width="1.2" stroke-linejoin="round" stroke-linecap="round"/></svg><svg style="left:240px;top:999px" width="21" height="18" viewBox="0 0 21 18"><path d="M5,6L10,3L15,5V10L10,12L5,10ZM5,6L10,8L15,5M10,8V12" fill="none" stroke="#222" stroke-width="1.1" stroke-linejoin="round" stroke-linecap="round"/><path d="M3,9C0,12 5,15 10,15C14,15 19,13 17,9M10,15L8,13M10,15L8,17" fill="none" stroke="#2f7fe6" stroke-width="1.3" stroke-linejoin="round" stroke-linecap="round"/></svg><div class="a" style="left:270px;top:996px;width:1px;height:24px;background:#888;"></div><svg style="left:279px;top:999px" width="18" height="18" viewBox="0 0 18 18"><path d="M1,9H17M9,1V17M3,4H15V14H3Z" fill="none" stroke="#222" stroke-width="1.3" stroke-linejoin="round" stroke-linecap="round"/><circle cx="9" cy="9" r="2.5" fill="#f0f0f0" stroke="#222" stroke-width="1.2"/></svg><svg style="left:307px;top:998px" width="20" height="20" viewBox="0 0 20 20"><path d="M1,6V1H6M14,1H19V6M19,14V19H14M6,19H1V14M5,10L10,5L15,10M6,9V16H14V9M9,16V12H11V16" fill="none" stroke="#222" stroke-width="1.2" stroke-linejoin="round" stroke-linecap="round"/></svg><svg style="left:336px;top:999px" width="18" height="18" viewBox="0 0 18 18"><path d="M5,2H13V9H5ZM9,9V17M9,11L3,17M9,11L15,17M1,5H5M13,5H17" fill="none" stroke="#222" stroke-width="1.2" stroke-linejoin="round" stroke-linecap="round"/><circle cx="9" cy="5.5" r="1.5" fill="#222"/></svg><svg style="left:367px;top:998px" width="18" height="20" viewBox="0 0 18 20"><path d="M3,12L9,7L15,12V18H3ZM9,7V18" fill="none" stroke="#222" stroke-width="1.2" stroke-linejoin="round" stroke-linecap="round"/><path d="M5,1L9,4L13,1M9,4V0M2,4L5,6M16,4L13,6" fill="none" stroke="#2f7fe6" stroke-width="1.1" stroke-linejoin="round" stroke-linecap="round"/></svg><svg style="left:394px;top:999px" width="19" height="18" viewBox="0 0 19 18"><path d="M1,9H4M15,9H18M5,4C8,2 11,2 14,4V14C11,16 8,16 5,14ZM9.5,3V15" fill="none" stroke="#aaa" stroke-width="1.2" stroke-linejoin="round" stroke-linecap="round"/></svg><div class="a" style="left:423px;top:996px;width:1px;height:24px;background:#888;"></div><svg style="left:436px;top:999px" width="19" height="18" viewBox="0 0 19 18"><path d="M1,6L5,2H12L14,6V14H1ZM1,6H14M5,2L8,6" fill="none" stroke="#222" stroke-width="1.2" stroke-linejoin="round" stroke-linecap="round"/><rect x="8" y="8" width="10" height="9" fill="#f0f0f0" stroke="#2f7fe6" stroke-width="1.2"/><path d="M10,11H16M10,14H16" fill="none" stroke="#2f7fe6" stroke-width="1.1" stroke-linejoin="round" stroke-linecap="round"/></svg><svg style="left:468px;top:1005px" width="8" height="5" viewBox="0 0 8 5"><path d="M0,0H8L4,4.5Z" fill="#222"/></svg><div class="a" style="left:481px;top:996px;width:1px;height:24px;background:#888;"></div><svg style="left:492px;top:998px" width="18" height="20" viewBox="0 0 18 20"><path d="M3,7L9,3L15,7V15L9,19L3,15Z" fill="none" stroke="#bbb" stroke-width="1.1" stroke-linejoin="round" stroke-linecap="round"/><path d="M5,8H14V17H5Z" fill="none" stroke="#222" stroke-width="1.4" stroke-linejoin="round" stroke-linecap="round"/><rect x="3.5" y="6.5" width="3" height="3" fill="#222"/><rect x="12.5" y="6.5" width="3" height="3" fill="#222"/><rect x="3.5" y="15.5" width="3" height="3" fill="#222"/><rect x="12.5" y="15.5" width="3" height="3" fill="#222"/></svg><svg style="left:523px;top:1005px" width="8" height="5" viewBox="0 0 8 5"><path d="M0,0H8L4,4.5Z" fill="#222"/></svg><svg style="left:539px;top:998px" width="19" height="19" viewBox="0 0 19 19"><path d="M1,9L8,2L14,8V16H1ZM8,2V16" fill="none" stroke="#222" stroke-width="1.2" stroke-linejoin="round" stroke-linecap="round"/><path d="M11,11H18L15,14V18L13,17V14Z" fill="#f0f0f0" stroke="#2f7fe6" stroke-width="1.1" stroke-linejoin="round" stroke-linecap="round"/></svg><svg style="left:572px;top:998px" width="19" height="19" viewBox="0 0 19 19"><path d="M1,7L11,1L18,9L8,16Z" fill="none" stroke="#222" stroke-width="1.3" stroke-linejoin="round" stroke-linecap="round"/><path d="M4,8L11,4L15,9L8,13Z" fill="none" stroke="#2f7fe6" stroke-width="1.3" stroke-linejoin="round" stroke-linecap="round"/></svg><svg style="left:603px;top:1005px" width="8" height="5" viewBox="0 0 8 5"><path d="M0,0H8L4,4.5Z" fill="#222"/></svg><div class="a" style="left:617px;top:996px;width:1px;height:24px;background:#888;"></div><svg style="left:625px;top:998px" width="17" height="20" viewBox="0 0 17 20"><path d="M9,1V6M7,6H12V9H7ZM4,9H14V14H4ZM2,17L4,14M5,17L7,14M8,17L10,14M11,17L13,14" fill="none" stroke="#222" stroke-width="1.2" stroke-linejoin="round" stroke-linecap="round"/></svg><svg style="left:652px;top:998px" width="20" height="20" viewBox="0 0 20 20"><path d="M4,2C2,5 2,7 4,7C6,7 6,5 4,2ZM8,4C6,7 6,9 8,9C10,9 10,7 8,4ZM6,11H16V15H6ZM16,9V17M2,17H16" fill="none" stroke="#222" stroke-width="1.1" stroke-linejoin="round" stroke-linecap="round"/></svg><div class="a" style="left:684px;top:996px;width:1px;height:24px;background:#888;"></div><svg style="left:696px;top:999px" width="19" height="18" viewBox="0 0 19 18"><path d="M1,5H5L7,2H12L14,5H18V16H1Z" fill="none" stroke="#222" stroke-width="1.3" stroke-linejoin="round" stroke-linecap="round"/><circle cx="9.5" cy="10" r="3.5" fill="none" stroke="#222" stroke-width="1.3"/></svg><svg style="left:727px;top:1005px" width="8" height="5" viewBox="0 0 8 5"><path d="M0,0H8L4,4.5Z" fill="#222"/></svg><svg style="left:743px;top:998px" width="20" height="19" viewBox="0 0 20 19"><path d="M1,4H4L6,1H10L12,4H14V13H1Z" fill="none" stroke="#222" stroke-width="1.2" stroke-linejoin="round" stroke-linecap="round"/><circle cx="7.5" cy="8" r="2.8" fill="none" stroke="#222" stroke-width="1.2"/><rect x="10" y="10" width="9" height="8" fill="#f0f0f0" stroke="#2f7fe6" stroke-width="1.2"/><path d="M12,13H17M12,15.5H17" fill="none" stroke="#2f7fe6" stroke-width="1" stroke-linejoin="round" stroke-linecap="round"/></svg><svg style="left:772px;top:998px" width="18" height="20" viewBox="0 0 18 20"><path d="M3,10L9,5L15,10V17H3ZM7,17V13H11V17" fill="none" stroke="#222" stroke-width="1.2" stroke-linejoin="round" stroke-linecap="round"/><path d="M1,1V19M17,1V19" fill="none" stroke="#2f7fe6" stroke-width="1" stroke-linejoin="round" stroke-dasharray="2,1.5"/></svg><div class="a" style="left:800px;top:996px;width:1px;height:24px;background:#888;"></div><svg style="left:808px;top:999px" width="19" height="16" viewBox="0 0 19 16"><path d="M1,4H13V14H1ZM13,7L18,4V14L13,11" fill="none" stroke="#222" stroke-width="1.3" stroke-linejoin="round" stroke-linecap="round"/><path d="M3,2C5,0 10,0 12,2" fill="none" stroke="#2f7fe6" stroke-width="1.2" stroke-linejoin="round" stroke-linecap="round"/></svg><svg style="left:838px;top:998px" width="19" height="20" viewBox="0 0 19 20"><path d="M5,1V4M1,5H4M2,2L4,4M8,2L6,4" fill="none" stroke="#222" stroke-width="1.1" stroke-linejoin="round" stroke-linecap="round"/><circle cx="5" cy="6" r="2" fill="none" stroke="#222" stroke-width="1.1"/><path d="M6,13L12,8L18,13V19H6ZM12,8V19" fill="none" stroke="#222" stroke-width="1.2" stroke-linejoin="round" stroke-linecap="round"/></svg><div class="a" style="left:921px;top:1002px;width:1px;height:14px;background:#888;"></div><div class="a" style="left:927px;top:995px;width:29px;height:28px;background:#e1e1e1;border:1px solid #adadad"></div><div class="a" style="left:957px;top:995px;width:29px;height:28px;background:#e1e1e1;border:1px solid #adadad"></div><div class="a" style="left:987px;top:995px;width:44px;height:28px;background:#e1e1e1;border:1px solid #adadad"></div><div class="a" style="left:1033px;top:995px;width:42px;height:28px;background:#e1e1e1;border:1px solid #adadad"></div><svg style="left:934px;top:1002px" width="14" height="14" viewBox="0 0 14 14"><path d="M3,3L11,11M11,3L3,11" fill="none" stroke="#222" stroke-width="1.2" stroke-linejoin="round" stroke-linecap="round"/><circle cx="7" cy="7" r="1.6" fill="#e1e1e1" stroke="#222" stroke-width="1"/></svg><svg style="left:961px;top:999px" width="22" height="21" viewBox="0 0 22 21"><path d="M1,5L20,1M1,9L20,5M1,13L20,9M1,17L20,13" fill="none" stroke="#999" stroke-width="0.9" stroke-linejoin="round" stroke-dasharray="1.5,1.5"/><path d="M4,16L18,9M15,8L18,9L17,12" fill="none" stroke="#222" stroke-width="1.1" stroke-linejoin="round" stroke-linecap="round"/><path d="M4,14V18M2,16H6" fill="none" stroke="#222" stroke-width="1" stroke-linejoin="round" stroke-linecap="round"/></svg><svg style="left:992px;top:999px" width="28" height="20" viewBox="0 0 28 20"><circle cx="2" cy="2" r="0.5" fill="#777"/><circle cx="2" cy="5" r="0.5" fill="#777"/><circle cx="2" cy="8" r="0.5" fill="#777"/><circle cx="2" cy="11" r="0.5" fill="#777"/><circle cx="2" cy="14" r="0.5" fill="#777"/><circle cx="2" cy="17" r="0.5" fill="#777"/><circle cx="5" cy="2" r="0.5" fill="#777"/><circle cx="5" cy="5" r="0.5" fill="#777"/><circle cx="5" cy="8" r="0.5" fill="#777"/><circle cx="5" cy="11" r="0.5" fill="#777"/><circle cx="5" cy="14" r="0.5" fill="#777"/><circle cx="5" cy="17" r="0.5" fill="#777"/><circle cx="8" cy="2" r="0.5" fill="#777"/><circle cx="8" cy="5" r="0.5" fill="#777"/><circle cx="8" cy="8" r="0.5" fill="#777"/><circle cx="8" cy="11" r="0.5" fill="#777"/><circle cx="8" cy="14" r="0.5" fill="#777"/><circle cx="8" cy="17" r="0.5" fill="#777"/><circle cx="11" cy="2" r="0.5" fill="#777"/><circle cx="11" cy="5" r="0.5" fill="#777"/><circle cx="11" cy="8" r="0.5" fill="#777"/><circle cx="11" cy="11" r="0.5" fill="#777"/><circle cx="11" cy="14" r="0.5" fill="#777"/><circle cx="11" cy="17" r="0.5" fill="#777"/><circle cx="14" cy="2" r="0.5" fill="#777"/><circle cx="14" cy="5" r="0.5" fill="#777"/><circle cx="14" cy="8" r="0.5" fill="#777"/><circle cx="14" cy="11" r="0.5" fill="#777"/><circle cx="14" cy="14" r="0.5" fill="#777"/><circle cx="14" cy="17" r="0.5" fill="#777"/><circle cx="17" cy="2" r="0.5" fill="#777"/><circle cx="17" cy="5" r="0.5" fill="#777"/><circle cx="17" cy="8" r="0.5" fill="#777"/><circle cx="17" cy="11" r="0.5" fill="#777"/><circle cx="17" cy="14" r="0.5" fill="#777"/><circle cx="17" cy="17" r="0.5" fill="#777"/><circle cx="20" cy="2" r="0.5" fill="#777"/><circle cx="20" cy="5" r="0.5" fill="#777"/><circle cx="20" cy="8" r="0.5" fill="#777"/><circle cx="20" cy="11" r="0.5" fill="#777"/><circle cx="20" cy="14" r="0.5" fill="#777"/><circle cx="20" cy="17" r="0.5" fill="#777"/><circle cx="23" cy="2" r="0.5" fill="#777"/><circle cx="23" cy="5" r="0.5" fill="#777"/><circle cx="23" cy="8" r="0.5" fill="#777"/><circle cx="23" cy="11" r="0.5" fill="#777"/><circle cx="23" cy="14" r="0.5" fill="#777"/><circle cx="23" cy="17" r="0.5" fill="#777"/><path d="M3,3V15H18M1,5L3,3L5,5M16,13L18,15L16,17" fill="none" stroke="#222" stroke-width="1.4" stroke-linejoin="round" stroke-linecap="round"/></svg><svg style="left:1023px;top:1004px" width="6" height="10" viewBox="0 0 6 10"><path d="M0.5,0.5L5.5,5L0.5,9.5Z" fill="#222"/></svg><svg style="left:1045px;top:1003px" width="10" height="10" viewBox="0 0 10 10"><path d="M5,3V7M3,5H7" fill="none" stroke="#222" stroke-width="1" stroke-linejoin="round" stroke-linecap="round"/></svg><svg style="left:1068px;top:1004px" width="6" height="10" viewBox="0 0 6 10"><path d="M0.5,0.5L5.5,5L0.5,9.5Z" fill="#222"/></svg><div class="a" style="left:1081px;top:997px;width:1px;height:24px;background:#888;"></div><div class="a" style="left:1087px;top:995px;width:15px;height:28px;background:#cce4f7;border:1px solid #1f6fd0"></div><svg style="left:1089px;top:1002px" width="11" height="12" viewBox="0 0 11 12"><path d="M5.5,1.5L10,10.5H1Z" fill="none" stroke="#222" stroke-width="1.8" stroke-linejoin="round" stroke-linecap="round"/></svg><div class="t" style="left:1117px;top:997px;font-size:11px;color:#111;">Δx:</div><div class="t" style="left:1117px;top:1012px;font-size:11px;color:#111;">Δy:</div><div class="a" style="left:1133px;top:993px;width:91px;height:30px;background:#fff;"></div><div class="t" style="left:1133.7px;top:996.67px;font-size:11.8px;color:#111;transform:scaleX(0.9336);transform-origin:0 0;">-269411,2</div><div class="t" style="left:1133.7px;top:1011.67px;font-size:11.8px;color:#111;transform:scaleX(0.9209);transform-origin:0 0;">-97744,4</div><div class="a" style="left:1229px;top:997px;width:1px;height:24px;background:#888;"></div><div class="a" style="left:1235px;top:995px;width:15px;height:28px;background:#cce4f7;border:1px solid #1f6fd0"></div><svg style="left:1237px;top:1002px" width="11" height="12" viewBox="0 0 11 12"><path d="M5.5,1.5L10,10.5H1Z" fill="none" stroke="#222" stroke-width="1.8" stroke-linejoin="round" stroke-linecap="round"/></svg><div class="t" style="left:1263px;top:997px;font-size:11px;color:#111;">Δr:</div><div class="t" style="left:1270px;top:1012px;font-size:11px;color:#111;">a:</div><div class="a" style="left:1280px;top:993px;width:90px;height:30px;background:#fff;"></div><div class="t" style="left:1280.8px;top:996.67px;font-size:11.8px;color:#111;transform:scaleX(0.9060);transform-origin:0 0;">286594,4</div><div class="t" style="left:1280.8px;top:1011.67px;font-size:11.8px;color:#111;transform:scaleX(0.8990);transform-origin:0 0;">199,94°</div><div class="a" style="left:1375px;top:997px;width:1px;height:24px;background:#888;"></div><div class="a" style="left:1382px;top:995px;width:42px;height:28px;background:#d6d6d6;border:1px solid #c8c8c8"></div><svg style="left:1390px;top:1001px" width="20" height="16" viewBox="0 0 20 16"><path d="M2,15L14,2" fill="none" stroke="#aaa" stroke-width="1.4" stroke-linejoin="round" stroke-linecap="round"/><path d="M16,6L20,9L16,12Z" fill="#aaa"/></svg><div class="t" style="left:1436px;top:997px;font-size:11px;color:#111;">Δz:</div><div class="a" style="left:1453px;top:993px;width:92px;height:16px;background:#fff;"></div><div class="t" style="left:1456px;top:996.67px;font-size:11.8px;color:#111;transform:scaleX(0.8949);transform-origin:0 0;">1069,7</div><div class="t" style="left:1435.4px;top:1011.67px;font-size:11.8px;color:#111;transform:scaleX(0.9779);transform-origin:0 0;">от Проектный ...</div><div class="a" style="left:1531px;top:1010px;width:13px;height:14px;background:#e1e1e1;border:1px solid #888"></div><svg style="left:1535px;top:1013px" width="6" height="8" viewBox="0 0 6 8"><path d="M0.5,0.5L5,4L0.5,7.5Z" fill="#222"/></svg><div class="a" style="left:0px;top:1027px;width:1920px;height:1px;background:#d8d8d8;"></div><div class="t" style="left:2.5px;top:1035.00px;font-size:12px;color:#111;transform:scaleX(0.9928);transform-origin:0 0;">Щелкните на элементе или начертите область выбора. Нажмите и не отпускайте Ctrl+Shift для переключения выбора элемента/подэлемента.</div><svg style="left:1745px;top:1032px" width="18" height="15" viewBox="0 0 18 15"><path d="M1,4H12V14H1ZM4,1H17V11H12M1,6H12" fill="none" stroke="#222" stroke-width="1.3" stroke-linejoin="round" stroke-linecap="round"/></svg><div class="a" style="left:1766px;top:1030px;width:1px;height:18px;background:#d0d0d0;"></div><div class="t" style="left:1782.7px;top:1031.71px;font-size:13.5px;color:#555;transform:scaleX(0.9287);transform-origin:0 0;">GRAPHISOFT ID</div><div class="a" style="left:1896px;top:1030px;width:1px;height:18px;background:#d0d0d0;"></div></body></html>
